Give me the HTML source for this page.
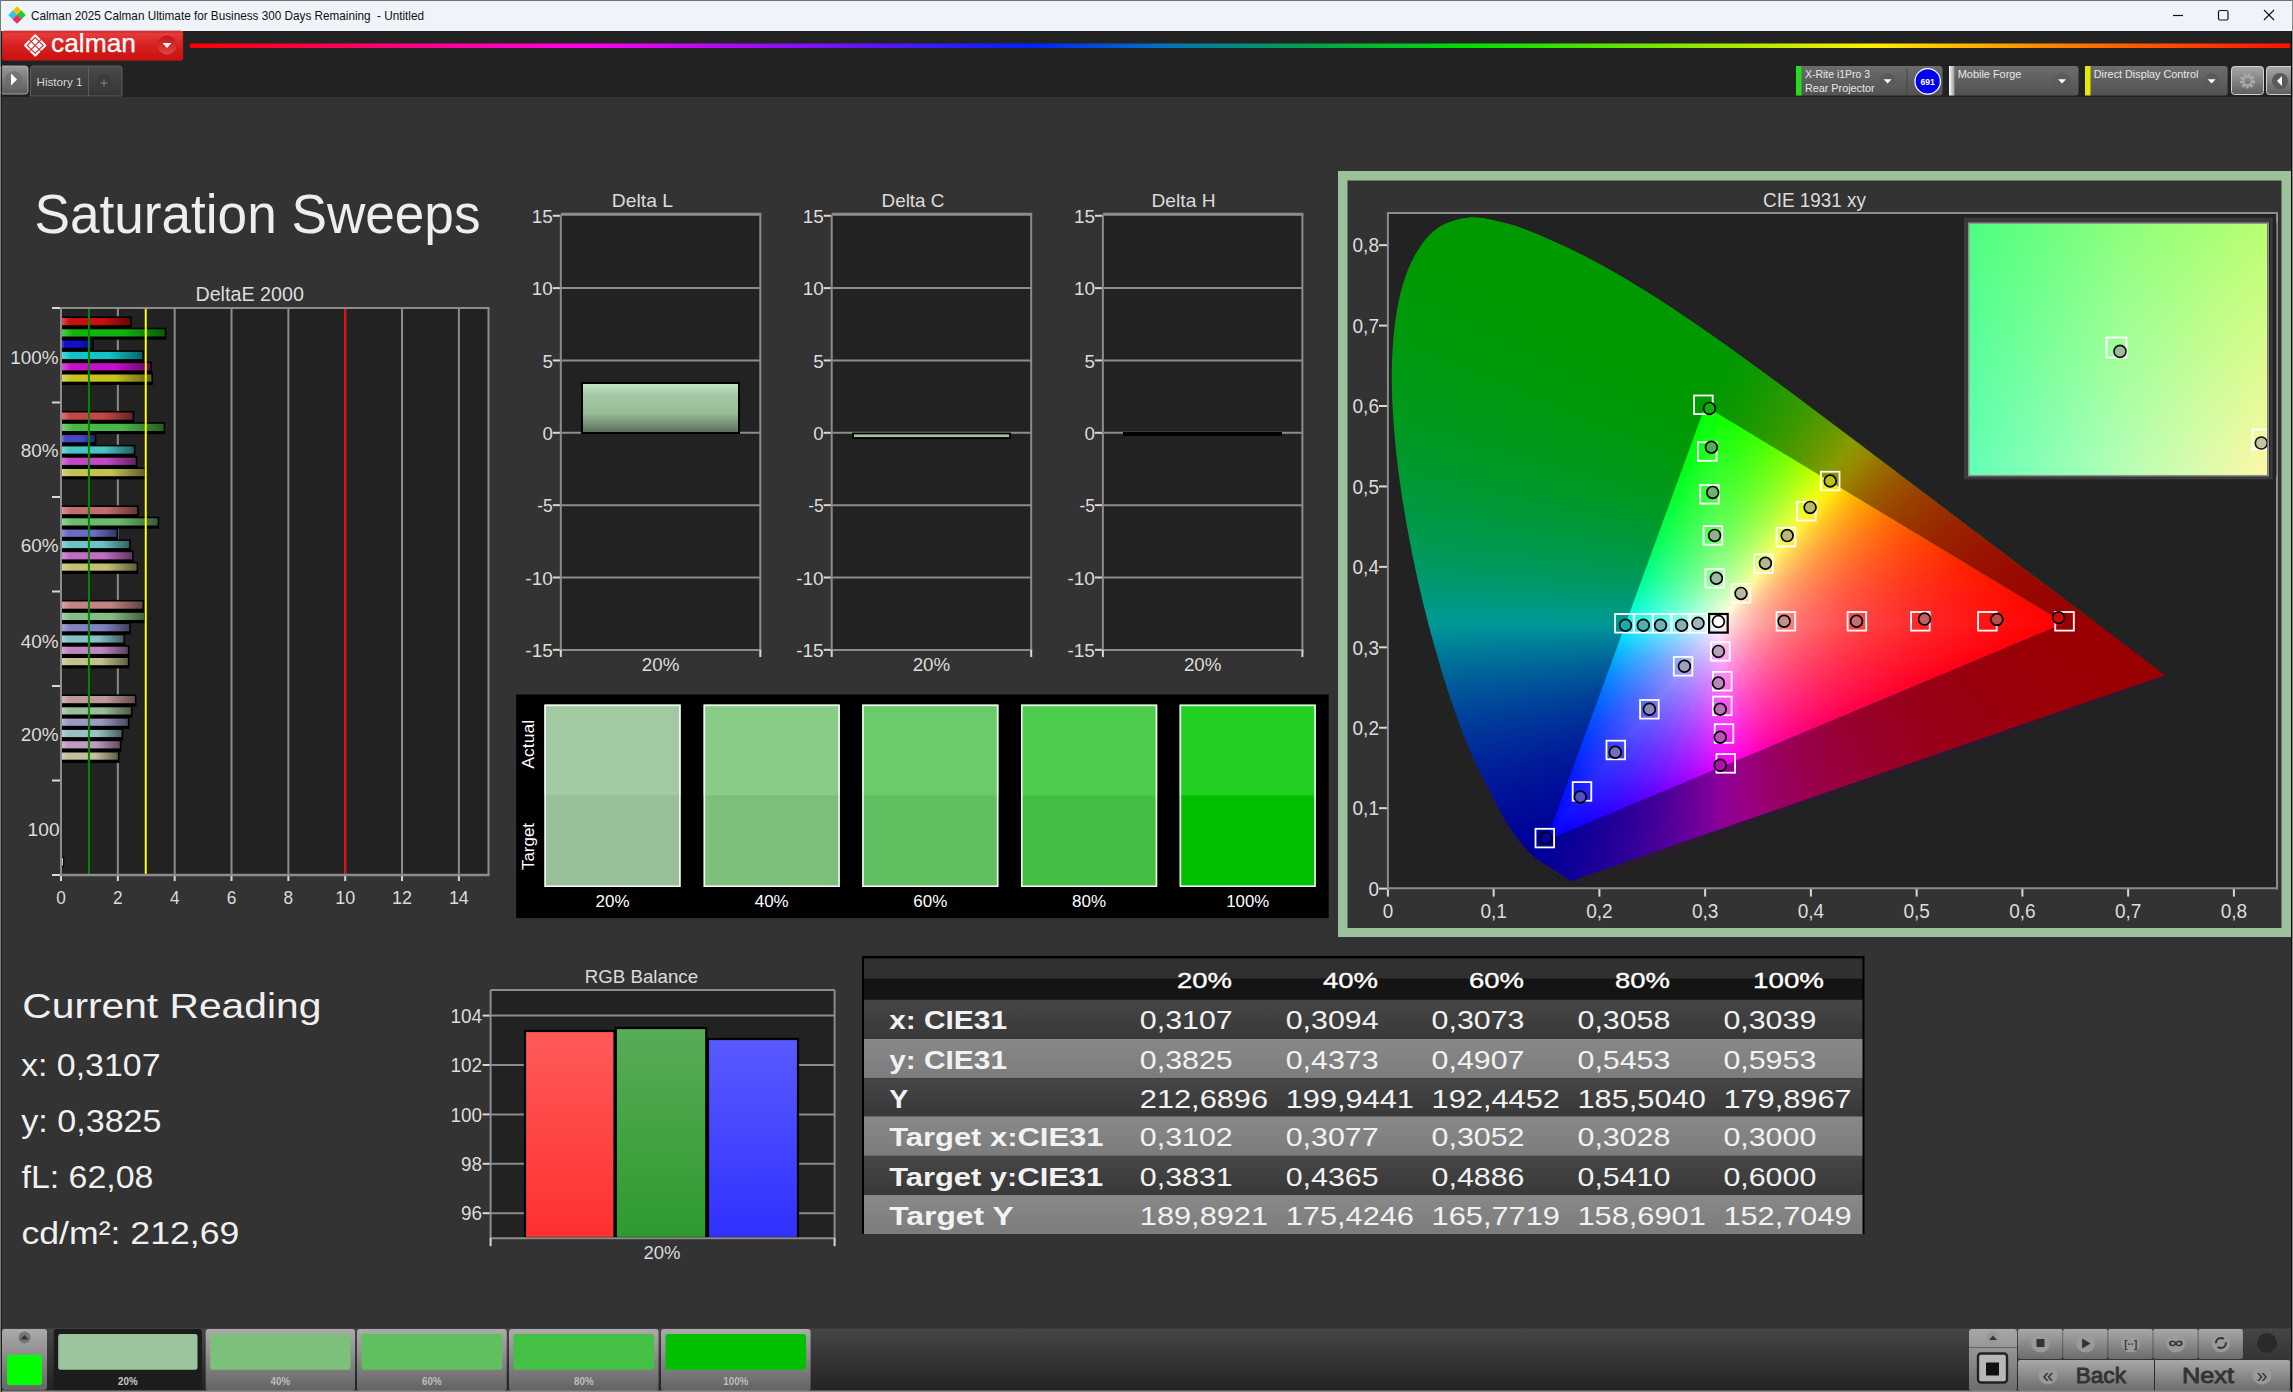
<!DOCTYPE html><html><head><meta charset="utf-8"><title>Calman</title><style>html,body{margin:0;padding:0;background:#333;overflow:hidden;width:2293px;height:1392px}svg{position:absolute;left:0;top:0}text{font-family:"Liberation Sans", sans-serif}.cie{position:absolute;left:0;top:0;width:2293px;height:1392px}</style></head><body><svg width="2293" height="1392" viewBox="0 0 2293 1392"><defs><linearGradient id="gLogo" x1="0" y1="0" x2="0" y2="1"><stop offset="0" stop-color="#e84040"/><stop offset="0.5" stop-color="#d8201f"/><stop offset="1" stop-color="#c81010"/></linearGradient><linearGradient id="gLogoBtn" x1="0" y1="0" x2="0" y2="1"><stop offset="0" stop-color="#c01515"/><stop offset="1" stop-color="#e04545"/></linearGradient><linearGradient id="gRain" x1="0" y1="0" x2="1" y2="0"><stop offset="0" stop-color="#ff0000"/><stop offset="0.19" stop-color="#ff00ee"/><stop offset="0.4" stop-color="#0022ff"/><stop offset="0.46" stop-color="#0070c0"/><stop offset="0.53" stop-color="#00a050"/><stop offset="0.61" stop-color="#00e000"/><stop offset="0.8" stop-color="#ffee00"/><stop offset="0.89" stop-color="#ff8000"/><stop offset="1" stop-color="#ff1000"/></linearGradient><linearGradient id="gTabBtn" x1="0" y1="0" x2="0" y2="1"><stop offset="0" stop-color="#9a9a9a"/><stop offset="1" stop-color="#5a5a5a"/></linearGradient><linearGradient id="gTab" x1="0" y1="0" x2="0" y2="1"><stop offset="0" stop-color="#4a4a4a"/><stop offset="1" stop-color="#353535"/></linearGradient><linearGradient id="gWid" x1="0" y1="0" x2="0" y2="1"><stop offset="0" stop-color="#6c6c6c"/><stop offset="1" stop-color="#525252"/></linearGradient><linearGradient id="gWhiteStripe" x1="0" y1="0" x2="1" y2="0"><stop offset="0" stop-color="#ffffff"/><stop offset="1" stop-color="#999999"/></linearGradient><linearGradient id="gTB" x1="0" y1="0" x2="0" y2="1"><stop offset="0" stop-color="#a8a8a8"/><stop offset="1" stop-color="#5e5e5e"/></linearGradient><linearGradient id="gB00" x1="0" y1="0" x2="1" y2="0"><stop offset="0" stop-color="#d85858"/><stop offset="0.12" stop-color="#c81010"/><stop offset="0.6" stop-color="#c81010"/><stop offset="1" stop-color="#640808"/></linearGradient><linearGradient id="gB01" x1="0" y1="0" x2="1" y2="0"><stop offset="0" stop-color="#58ca58"/><stop offset="0.12" stop-color="#10b410"/><stop offset="0.6" stop-color="#10b410"/><stop offset="1" stop-color="#085a08"/></linearGradient><linearGradient id="gB02" x1="0" y1="0" x2="1" y2="0"><stop offset="0" stop-color="#5858d8"/><stop offset="0.12" stop-color="#1010c8"/><stop offset="0.6" stop-color="#1010c8"/><stop offset="1" stop-color="#080864"/></linearGradient><linearGradient id="gB03" x1="0" y1="0" x2="1" y2="0"><stop offset="0" stop-color="#58d6d8"/><stop offset="0.12" stop-color="#10c4c8"/><stop offset="0.6" stop-color="#10c4c8"/><stop offset="1" stop-color="#086264"/></linearGradient><linearGradient id="gB04" x1="0" y1="0" x2="1" y2="0"><stop offset="0" stop-color="#d658d8"/><stop offset="0.12" stop-color="#c410c8"/><stop offset="0.6" stop-color="#c410c8"/><stop offset="1" stop-color="#620864"/></linearGradient><linearGradient id="gB05" x1="0" y1="0" x2="1" y2="0"><stop offset="0" stop-color="#d8d363"/><stop offset="0.12" stop-color="#c8c020"/><stop offset="0.6" stop-color="#c8c020"/><stop offset="1" stop-color="#646010"/></linearGradient><linearGradient id="gB10" x1="0" y1="0" x2="1" y2="0"><stop offset="0" stop-color="#d67f7f"/><stop offset="0.12" stop-color="#c54848"/><stop offset="0.6" stop-color="#c54848"/><stop offset="1" stop-color="#622424"/></linearGradient><linearGradient id="gB11" x1="0" y1="0" x2="1" y2="0"><stop offset="0" stop-color="#7fcd7f"/><stop offset="0.12" stop-color="#48b848"/><stop offset="0.6" stop-color="#48b848"/><stop offset="1" stop-color="#245c24"/></linearGradient><linearGradient id="gB12" x1="0" y1="0" x2="1" y2="0"><stop offset="0" stop-color="#7f7fd6"/><stop offset="0.12" stop-color="#4848c5"/><stop offset="0.6" stop-color="#4848c5"/><stop offset="1" stop-color="#242462"/></linearGradient><linearGradient id="gB13" x1="0" y1="0" x2="1" y2="0"><stop offset="0" stop-color="#7fd5d6"/><stop offset="0.12" stop-color="#48c3c5"/><stop offset="0.6" stop-color="#48c3c5"/><stop offset="1" stop-color="#246262"/></linearGradient><linearGradient id="gB14" x1="0" y1="0" x2="1" y2="0"><stop offset="0" stop-color="#d57fd6"/><stop offset="0.12" stop-color="#c348c5"/><stop offset="0.6" stop-color="#c348c5"/><stop offset="1" stop-color="#622462"/></linearGradient><linearGradient id="gB15" x1="0" y1="0" x2="1" y2="0"><stop offset="0" stop-color="#d6d387"/><stop offset="0.12" stop-color="#c5c053"/><stop offset="0.6" stop-color="#c5c053"/><stop offset="1" stop-color="#62602a"/></linearGradient><linearGradient id="gB20" x1="0" y1="0" x2="1" y2="0"><stop offset="0" stop-color="#d69898"/><stop offset="0.12" stop-color="#c46c6c"/><stop offset="0.6" stop-color="#c46c6c"/><stop offset="1" stop-color="#623636"/></linearGradient><linearGradient id="gB21" x1="0" y1="0" x2="1" y2="0"><stop offset="0" stop-color="#98cf98"/><stop offset="0.12" stop-color="#6cba6c"/><stop offset="0.6" stop-color="#6cba6c"/><stop offset="1" stop-color="#365d36"/></linearGradient><linearGradient id="gB22" x1="0" y1="0" x2="1" y2="0"><stop offset="0" stop-color="#9898d6"/><stop offset="0.12" stop-color="#6c6cc4"/><stop offset="0.6" stop-color="#6c6cc4"/><stop offset="1" stop-color="#363662"/></linearGradient><linearGradient id="gB23" x1="0" y1="0" x2="1" y2="0"><stop offset="0" stop-color="#98d4d6"/><stop offset="0.12" stop-color="#6cc2c4"/><stop offset="0.6" stop-color="#6cc2c4"/><stop offset="1" stop-color="#366162"/></linearGradient><linearGradient id="gB24" x1="0" y1="0" x2="1" y2="0"><stop offset="0" stop-color="#d498d6"/><stop offset="0.12" stop-color="#c26cc4"/><stop offset="0.6" stop-color="#c26cc4"/><stop offset="1" stop-color="#613662"/></linearGradient><linearGradient id="gB25" x1="0" y1="0" x2="1" y2="0"><stop offset="0" stop-color="#d6d39d"/><stop offset="0.12" stop-color="#c4c073"/><stop offset="0.6" stop-color="#c4c073"/><stop offset="1" stop-color="#62603a"/></linearGradient><linearGradient id="gB30" x1="0" y1="0" x2="1" y2="0"><stop offset="0" stop-color="#d5a9a9"/><stop offset="0.12" stop-color="#c38484"/><stop offset="0.6" stop-color="#c38484"/><stop offset="1" stop-color="#624242"/></linearGradient><linearGradient id="gB31" x1="0" y1="0" x2="1" y2="0"><stop offset="0" stop-color="#a9d0a9"/><stop offset="0.12" stop-color="#84bc84"/><stop offset="0.6" stop-color="#84bc84"/><stop offset="1" stop-color="#425e42"/></linearGradient><linearGradient id="gB32" x1="0" y1="0" x2="1" y2="0"><stop offset="0" stop-color="#a9a9d5"/><stop offset="0.12" stop-color="#8484c3"/><stop offset="0.6" stop-color="#8484c3"/><stop offset="1" stop-color="#424262"/></linearGradient><linearGradient id="gB33" x1="0" y1="0" x2="1" y2="0"><stop offset="0" stop-color="#a9d4d5"/><stop offset="0.12" stop-color="#84c1c3"/><stop offset="0.6" stop-color="#84c1c3"/><stop offset="1" stop-color="#426062"/></linearGradient><linearGradient id="gB34" x1="0" y1="0" x2="1" y2="0"><stop offset="0" stop-color="#d4a9d5"/><stop offset="0.12" stop-color="#c184c3"/><stop offset="0.6" stop-color="#c184c3"/><stop offset="1" stop-color="#604262"/></linearGradient><linearGradient id="gB35" x1="0" y1="0" x2="1" y2="0"><stop offset="0" stop-color="#d5d3ad"/><stop offset="0.12" stop-color="#c3c08a"/><stop offset="0.6" stop-color="#c3c08a"/><stop offset="1" stop-color="#626045"/></linearGradient><linearGradient id="gB40" x1="0" y1="0" x2="1" y2="0"><stop offset="0" stop-color="#d4b8b8"/><stop offset="0.12" stop-color="#c29999"/><stop offset="0.6" stop-color="#c29999"/><stop offset="1" stop-color="#614c4c"/></linearGradient><linearGradient id="gB41" x1="0" y1="0" x2="1" y2="0"><stop offset="0" stop-color="#b8d1b8"/><stop offset="0.12" stop-color="#99bd99"/><stop offset="0.6" stop-color="#99bd99"/><stop offset="1" stop-color="#4c5e4c"/></linearGradient><linearGradient id="gB42" x1="0" y1="0" x2="1" y2="0"><stop offset="0" stop-color="#b8b8d4"/><stop offset="0.12" stop-color="#9999c2"/><stop offset="0.6" stop-color="#9999c2"/><stop offset="1" stop-color="#4c4c61"/></linearGradient><linearGradient id="gB43" x1="0" y1="0" x2="1" y2="0"><stop offset="0" stop-color="#b8d4d4"/><stop offset="0.12" stop-color="#99c1c2"/><stop offset="0.6" stop-color="#99c1c2"/><stop offset="1" stop-color="#4c6061"/></linearGradient><linearGradient id="gB44" x1="0" y1="0" x2="1" y2="0"><stop offset="0" stop-color="#d4b8d4"/><stop offset="0.12" stop-color="#c199c2"/><stop offset="0.6" stop-color="#c199c2"/><stop offset="1" stop-color="#604c61"/></linearGradient><linearGradient id="gB45" x1="0" y1="0" x2="1" y2="0"><stop offset="0" stop-color="#d4d3ba"/><stop offset="0.12" stop-color="#c2c09d"/><stop offset="0.6" stop-color="#c2c09d"/><stop offset="1" stop-color="#61604e"/></linearGradient><linearGradient id="gDL" x1="0" y1="0" x2="0" y2="1"><stop offset="0" stop-color="#c8e4c8"/><stop offset="0.25" stop-color="#a4c8a4"/><stop offset="0.6" stop-color="#98bc98"/><stop offset="1" stop-color="#5a6c5a"/></linearGradient><linearGradient id="gRr" x1="0" y1="0" x2="0" y2="1"><stop offset="0" stop-color="#ff5a5a"/><stop offset="1" stop-color="#ff3030"/></linearGradient><linearGradient id="gRg" x1="0" y1="0" x2="0" y2="1"><stop offset="0" stop-color="#58ac58"/><stop offset="1" stop-color="#2e9a2e"/></linearGradient><linearGradient id="gRb" x1="0" y1="0" x2="0" y2="1"><stop offset="0" stop-color="#5a5aff"/><stop offset="1" stop-color="#3030ff"/></linearGradient><linearGradient id="gRowD" x1="0" y1="0" x2="0" y2="1"><stop offset="0" stop-color="#464646"/><stop offset="1" stop-color="#383838"/></linearGradient><linearGradient id="gRowL" x1="0" y1="0" x2="0" y2="1"><stop offset="0" stop-color="#888888"/><stop offset="1" stop-color="#7c7c7c"/></linearGradient><linearGradient id="gBar" x1="0" y1="0" x2="0" y2="1"><stop offset="0" stop-color="#464646"/><stop offset="1" stop-color="#222222"/></linearGradient><linearGradient id="gBtn" x1="0" y1="0" x2="0" y2="1"><stop offset="0" stop-color="#a8a8a8"/><stop offset="0.5" stop-color="#8a8a8a"/><stop offset="1" stop-color="#6c6c6c"/></linearGradient><linearGradient id="gTabU" x1="0" y1="0" x2="0" y2="1"><stop offset="0" stop-color="#ababab"/><stop offset="0.45" stop-color="#8c8c8c"/><stop offset="1" stop-color="#626262"/></linearGradient><linearGradient id="gLW" x1="0" y1="0" x2="0" y2="1"><stop offset="0" stop-color="#ababab"/><stop offset="1" stop-color="#666666"/></linearGradient></defs><rect x="0" y="0" width="2293" height="1392" fill="#333333"/><rect x="0" y="0" width="2293" height="31" fill="#eef4f9"/><rect x="0" y="0" width="2293" height="1" fill="#6e6e6e"/><rect x="0" y="31" width="2293" height="66" fill="#222222"/><rect x="0" y="0" width="1" height="1392" fill="#7a7a7a"/><text x="31" y="20.4" font-size="13" fill="#111111" textLength="393" lengthAdjust="spacingAndGlyphs">Calman 2025 Calman Ultimate for Business 300 Days Remaining  - Untitled</text><g transform="translate(17,15)"><rect x="-3.2" y="-7.5" width="6.4" height="6.4" fill="#f4c400" transform="rotate(45 0 -4.3)"/><rect x="-7.5" y="-3.2" width="6.4" height="6.4" fill="#33c3f0" transform="rotate(45 -4.3 0)"/><rect x="1.1" y="-3.2" width="6.4" height="6.4" fill="#22cc22" transform="rotate(45 4.3 0)"/><rect x="-3.2" y="1.1" width="6.4" height="6.4" fill="#ee2a6a" transform="rotate(45 0 4.3)"/></g><line x1="2173" y1="15.5" x2="2183" y2="15.5" stroke="#111" stroke-width="1.2"/><rect x="2218.5" y="10.5" width="9.5" height="9.5" rx="1.5" fill="none" stroke="#111" stroke-width="1.2"/><line x1="2264" y1="10" x2="2274" y2="20" stroke="#111" stroke-width="1.1"/><line x1="2274" y1="10" x2="2264" y2="20" stroke="#111" stroke-width="1.1"/><rect x="2" y="31" width="181" height="29.5" rx="2.5" fill="url(#gLogo)" stroke="#8a2020" stroke-width="0.6"/><rect x="2" y="31" width="181" height="2" fill="#d83030"/><g transform="translate(35.2,45.4) rotate(45)"><rect x="-8.2" y="-8.2" width="16.4" height="16.4" rx="1.2" fill="#fff"/><rect x="-5.6" y="-5.6" width="11.2" height="11.2" fill="none" stroke="#d82222" stroke-width="1.1"/><line x1="0" y1="-9" x2="0" y2="9" stroke="#d82222" stroke-width="1.1"/><line x1="-9" y1="0" x2="9" y2="0" stroke="#d82222" stroke-width="1.1"/></g><text x="51" y="52.2" font-size="26.5" fill="#ffffff" textLength="85" lengthAdjust="spacingAndGlyphs" stroke="#fff" stroke-width="0.25">calman</text><circle cx="167" cy="45" r="9.5" fill="url(#gLogoBtn)"/><path d="M162.5,43 L171.5,43 L167,48 Z" fill="#fff"/><rect x="190" y="43.5" width="2100" height="4.5" fill="url(#gRain)"/><rect x="0" y="66" width="28" height="28" rx="3" fill="url(#gTabBtn)" stroke="#bdbdbd" stroke-width="0.8"/><circle cx="13.5" cy="80" r="9" fill="#6a6a6a" opacity="0.6"/><path d="M11,73.5 L17,79.5 L11,85.5 Z" fill="#fff"/><path d="M30.5,96 L30.5,69 Q30.5,66 33.5,66 L119,66 Q122,66 122,69 L122,96 Z" fill="url(#gTab)" stroke="#6a6a6a" stroke-width="0.8"/><line x1="88.5" y1="67" x2="88.5" y2="96" stroke="#666" stroke-width="0.8"/><circle cx="104" cy="83" r="8.5" fill="#3a3a3a"/><line x1="100.5" y1="83" x2="107.5" y2="83" stroke="#8a8a8a" stroke-width="0.9"/><line x1="104" y1="79.5" x2="104" y2="86.5" stroke="#8a8a8a" stroke-width="0.9"/><text x="36.6" y="85.9" font-size="11.3" fill="#d8d8d8" textLength="45.8" lengthAdjust="spacingAndGlyphs">History 1</text><rect x="1796" y="66" width="146.5" height="29.5" rx="3" fill="url(#gWid)"/><rect x="1796" y="66" width="5.5" height="29.5" fill="#22dd22"/><line x1="1907" y1="69" x2="1907" y2="95" stroke="#444" stroke-width="1"/><text x="1805" y="78" font-size="10.6" fill="#e8e8e8" textLength="65" lengthAdjust="spacingAndGlyphs">X-Rite i1Pro 3</text><text x="1805" y="91.8" font-size="10.6" fill="#e8e8e8" textLength="69.5" lengthAdjust="spacingAndGlyphs">Rear Projector</text><circle cx="1887.6" cy="81.3" r="8" fill="#5a5a5a"/><path d="M1883.6,79.3 L1891.6,79.3 L1887.6,83.6 Z" fill="#fff"/><circle cx="1927.7" cy="81.4" r="12.7" fill="#0000ee" stroke="#ffffff" stroke-width="1.2"/><text x="1927.7" y="84.6" font-size="9.5" fill="#ffffff" text-anchor="middle" font-weight="bold" textLength="14.3" lengthAdjust="spacingAndGlyphs">691</text><rect x="1949" y="66" width="129.5" height="29.5" rx="3" fill="url(#gWid)"/><rect x="1949" y="66" width="5.5" height="29.5" fill="url(#gWhiteStripe)"/><text x="1957.8" y="78" font-size="10.6" fill="#e8e8e8" textLength="63.6" lengthAdjust="spacingAndGlyphs">Mobile Forge</text><circle cx="2062" cy="81.3" r="8" fill="#5a5a5a"/><path d="M2058,79.3 L2066,79.3 L2062,83.6 Z" fill="#fff"/><rect x="2085" y="66" width="142.6" height="29.5" rx="3" fill="url(#gWid)"/><rect x="2085" y="66" width="5.5" height="29.5" fill="#e8e800"/><text x="2093.8" y="78" font-size="10.6" fill="#e8e8e8" textLength="104.6" lengthAdjust="spacingAndGlyphs">Direct Display Control</text><circle cx="2211.6" cy="81.3" r="8" fill="#5a5a5a"/><path d="M2207.6,79.3 L2215.6,79.3 L2211.6,83.6 Z" fill="#fff"/><rect x="2231.5" y="66.5" width="32" height="28" rx="3" fill="url(#gTB)" stroke="#e0e0e0" stroke-width="0.9"/><circle cx="2247.5" cy="81" r="6" fill="none" stroke="#aaa" stroke-width="3" stroke-dasharray="2.4 1.6"/><circle cx="2247.5" cy="81" r="4.2" fill="none" stroke="#aaa" stroke-width="2"/><rect x="2266.5" y="66.5" width="30" height="28" rx="3" fill="url(#gTB)" stroke="#e0e0e0" stroke-width="0.9"/><circle cx="2280" cy="81" r="8" fill="#5a5a5a"/><path d="M2282,76 L2282,86 L2277,81 Z" fill="#fff"/><text x="34.5" y="233.1" font-size="55.6" fill="#eeeeee" textLength="446" lengthAdjust="spacingAndGlyphs">Saturation Sweeps</text><rect x="61" y="308" width="427.5" height="567" fill="#222222"/><line x1="117.84" y1="308" x2="117.84" y2="875" stroke="#8c8c8c" stroke-width="2"/><line x1="174.68" y1="308" x2="174.68" y2="875" stroke="#8c8c8c" stroke-width="2"/><line x1="231.52" y1="308" x2="231.52" y2="875" stroke="#8c8c8c" stroke-width="2"/><line x1="288.36" y1="308" x2="288.36" y2="875" stroke="#8c8c8c" stroke-width="2"/><line x1="345.2" y1="308" x2="345.2" y2="875" stroke="#8c8c8c" stroke-width="2"/><line x1="402.04" y1="308" x2="402.04" y2="875" stroke="#8c8c8c" stroke-width="2"/><line x1="458.88" y1="308" x2="458.88" y2="875" stroke="#8c8c8c" stroke-width="2"/><text x="195.4" y="300.7" font-size="20" fill="#dcdcdc" textLength="108.5" lengthAdjust="spacingAndGlyphs">DeltaE 2000</text><line x1="52" y1="308" x2="61" y2="308" stroke="#d8d8d8" stroke-width="2"/><line x1="52" y1="402.5" x2="61" y2="402.5" stroke="#d8d8d8" stroke-width="2"/><line x1="52" y1="497" x2="61" y2="497" stroke="#d8d8d8" stroke-width="2"/><line x1="52" y1="591.5" x2="61" y2="591.5" stroke="#d8d8d8" stroke-width="2"/><line x1="52" y1="686" x2="61" y2="686" stroke="#d8d8d8" stroke-width="2"/><line x1="52" y1="780.5" x2="61" y2="780.5" stroke="#d8d8d8" stroke-width="2"/><line x1="52" y1="875" x2="61" y2="875" stroke="#d8d8d8" stroke-width="2"/><text x="58.6" y="364.1" font-size="18.6" fill="#dcdcdc" text-anchor="end" textLength="48.3" lengthAdjust="spacingAndGlyphs">100%</text><text x="58.6" y="456.6" font-size="18.6" fill="#dcdcdc" text-anchor="end" textLength="37.9" lengthAdjust="spacingAndGlyphs">80%</text><text x="58.6" y="552" font-size="18.6" fill="#dcdcdc" text-anchor="end" textLength="37.9" lengthAdjust="spacingAndGlyphs">60%</text><text x="58.6" y="647.5" font-size="18.6" fill="#dcdcdc" text-anchor="end" textLength="37.9" lengthAdjust="spacingAndGlyphs">40%</text><text x="58.6" y="740.7" font-size="18.6" fill="#dcdcdc" text-anchor="end" textLength="37.9" lengthAdjust="spacingAndGlyphs">20%</text><text x="59.6" y="835.6" font-size="18.6" fill="#dcdcdc" text-anchor="end" textLength="32" lengthAdjust="spacingAndGlyphs">100</text><line x1="61" y1="875" x2="61" y2="881" stroke="#d8d8d8" stroke-width="2"/><text x="61" y="904" font-size="18.5" fill="#dcdcdc" text-anchor="middle" textLength="9.6" lengthAdjust="spacingAndGlyphs">0</text><line x1="117.84" y1="875" x2="117.84" y2="881" stroke="#d8d8d8" stroke-width="2"/><text x="117.84" y="904" font-size="18.5" fill="#dcdcdc" text-anchor="middle" textLength="9.6" lengthAdjust="spacingAndGlyphs">2</text><line x1="174.68" y1="875" x2="174.68" y2="881" stroke="#d8d8d8" stroke-width="2"/><text x="174.68" y="904" font-size="18.5" fill="#dcdcdc" text-anchor="middle" textLength="9.6" lengthAdjust="spacingAndGlyphs">4</text><line x1="231.52" y1="875" x2="231.52" y2="881" stroke="#d8d8d8" stroke-width="2"/><text x="231.52" y="904" font-size="18.5" fill="#dcdcdc" text-anchor="middle" textLength="9.6" lengthAdjust="spacingAndGlyphs">6</text><line x1="288.36" y1="875" x2="288.36" y2="881" stroke="#d8d8d8" stroke-width="2"/><text x="288.36" y="904" font-size="18.5" fill="#dcdcdc" text-anchor="middle" textLength="9.6" lengthAdjust="spacingAndGlyphs">8</text><line x1="345.2" y1="875" x2="345.2" y2="881" stroke="#d8d8d8" stroke-width="2"/><text x="345.2" y="904" font-size="18.5" fill="#dcdcdc" text-anchor="middle" textLength="20" lengthAdjust="spacingAndGlyphs">10</text><line x1="402.04" y1="875" x2="402.04" y2="881" stroke="#d8d8d8" stroke-width="2"/><text x="402.04" y="904" font-size="18.5" fill="#dcdcdc" text-anchor="middle" textLength="20" lengthAdjust="spacingAndGlyphs">12</text><line x1="458.88" y1="875" x2="458.88" y2="881" stroke="#d8d8d8" stroke-width="2"/><text x="458.88" y="904" font-size="18.5" fill="#dcdcdc" text-anchor="middle" textLength="20" lengthAdjust="spacingAndGlyphs">14</text><rect x="61" y="316.4" width="70.66" height="12" fill="#000000"/><rect x="61" y="318" width="69.06" height="7.2" fill="url(#gB00)"/><rect x="61" y="327.7" width="105.33" height="12" fill="#000000"/><rect x="61" y="329.3" width="103.73" height="7.2" fill="url(#gB01)"/><rect x="61" y="339" width="32.58" height="12" fill="#000000"/><rect x="61" y="340.6" width="30.98" height="7.2" fill="url(#gB02)"/><rect x="61" y="350.3" width="82.88" height="12" fill="#000000"/><rect x="61" y="351.9" width="81.28" height="7.2" fill="url(#gB03)"/><rect x="61" y="361.6" width="90.84" height="12" fill="#000000"/><rect x="61" y="363.2" width="89.24" height="7.2" fill="url(#gB04)"/><rect x="61" y="372.9" width="91.98" height="12" fill="#000000"/><rect x="61" y="374.5" width="90.38" height="7.2" fill="url(#gB05)"/><rect x="61" y="410.9" width="73.22" height="12" fill="#000000"/><rect x="61" y="412.5" width="71.62" height="7.2" fill="url(#gB10)"/><rect x="61" y="422.2" width="104.2" height="12" fill="#000000"/><rect x="61" y="423.8" width="102.6" height="7.2" fill="url(#gB11)"/><rect x="61" y="433.5" width="35.42" height="12" fill="#000000"/><rect x="61" y="435.1" width="33.82" height="7.2" fill="url(#gB12)"/><rect x="61" y="444.8" width="74.36" height="12" fill="#000000"/><rect x="61" y="446.4" width="72.76" height="7.2" fill="url(#gB13)"/><rect x="61" y="456.1" width="76.34" height="12" fill="#000000"/><rect x="61" y="457.7" width="74.74" height="7.2" fill="url(#gB14)"/><rect x="61" y="467.4" width="85.15" height="12" fill="#000000"/><rect x="61" y="469" width="83.55" height="7.2" fill="url(#gB15)"/><rect x="61" y="505.4" width="77.77" height="12" fill="#000000"/><rect x="61" y="507" width="76.17" height="7.2" fill="url(#gB20)"/><rect x="61" y="516.7" width="98.23" height="12" fill="#000000"/><rect x="61" y="518.3" width="96.63" height="7.2" fill="url(#gB21)"/><rect x="61" y="528" width="57.3" height="12" fill="#000000"/><rect x="61" y="529.6" width="55.7" height="7.2" fill="url(#gB22)"/><rect x="61" y="539.3" width="69.81" height="12" fill="#000000"/><rect x="61" y="540.9" width="68.21" height="7.2" fill="url(#gB23)"/><rect x="61" y="550.6" width="72.65" height="12" fill="#000000"/><rect x="61" y="552.2" width="71.05" height="7.2" fill="url(#gB24)"/><rect x="61" y="561.9" width="77.2" height="12" fill="#000000"/><rect x="61" y="563.5" width="75.6" height="7.2" fill="url(#gB25)"/><rect x="61" y="599.9" width="83.17" height="12" fill="#000000"/><rect x="61" y="601.5" width="81.57" height="7.2" fill="url(#gB30)"/><rect x="61" y="611.2" width="84.87" height="12" fill="#000000"/><rect x="61" y="612.8" width="83.27" height="7.2" fill="url(#gB31)"/><rect x="61" y="622.5" width="69.81" height="12" fill="#000000"/><rect x="61" y="624.1" width="68.21" height="7.2" fill="url(#gB32)"/><rect x="61" y="633.8" width="64.12" height="12" fill="#000000"/><rect x="61" y="635.4" width="62.52" height="7.2" fill="url(#gB33)"/><rect x="61" y="645.1" width="68.39" height="12" fill="#000000"/><rect x="61" y="646.7" width="66.79" height="7.2" fill="url(#gB34)"/><rect x="61" y="656.4" width="68.39" height="12" fill="#000000"/><rect x="61" y="658" width="66.79" height="7.2" fill="url(#gB35)"/><rect x="61" y="694.4" width="75.49" height="12" fill="#000000"/><rect x="61" y="696" width="73.89" height="7.2" fill="url(#gB40)"/><rect x="61" y="705.7" width="71.51" height="12" fill="#000000"/><rect x="61" y="707.3" width="69.91" height="7.2" fill="url(#gB41)"/><rect x="61" y="717" width="68.39" height="12" fill="#000000"/><rect x="61" y="718.6" width="66.79" height="7.2" fill="url(#gB42)"/><rect x="61" y="728.3" width="62.13" height="12" fill="#000000"/><rect x="61" y="729.9" width="60.53" height="7.2" fill="url(#gB43)"/><rect x="61" y="739.6" width="60.43" height="12" fill="#000000"/><rect x="61" y="741.2" width="58.83" height="7.2" fill="url(#gB44)"/><rect x="61" y="750.9" width="58.44" height="12" fill="#000000"/><rect x="61" y="752.5" width="56.84" height="7.2" fill="url(#gB45)"/><rect x="61" y="857" width="3.2" height="10" fill="#000"/><rect x="61" y="858" width="1.8" height="7.5" fill="#ffffff"/><line x1="88.92" y1="308" x2="88.92" y2="875" stroke="#008a00" stroke-width="2"/><line x1="145.76" y1="308" x2="145.76" y2="875" stroke="#ffff00" stroke-width="2"/><line x1="345.2" y1="308" x2="345.2" y2="875" stroke="#ee0000" stroke-width="2"/><line x1="61" y1="308" x2="489.5" y2="308" stroke="#8c8c8c" stroke-width="2"/><line x1="488.5" y1="308" x2="488.5" y2="875" stroke="#8c8c8c" stroke-width="2"/><line x1="61" y1="307" x2="61" y2="876" stroke="#8c8c8c" stroke-width="2"/><line x1="60" y1="875" x2="489.5" y2="875" stroke="#8c8c8c" stroke-width="2.5"/><rect x="560.8" y="215.7" width="199.5" height="434.2" fill="#222222"/><line x1="560.8" y1="288.1" x2="760.3" y2="288.1" stroke="#8c8c8c" stroke-width="2"/><line x1="560.8" y1="360.45" x2="760.3" y2="360.45" stroke="#8c8c8c" stroke-width="2"/><line x1="560.8" y1="432.8" x2="760.3" y2="432.8" stroke="#8c8c8c" stroke-width="2"/><line x1="560.8" y1="505.15" x2="760.3" y2="505.15" stroke="#8c8c8c" stroke-width="2"/><line x1="560.8" y1="577.5" x2="760.3" y2="577.5" stroke="#8c8c8c" stroke-width="2"/><line x1="552.8" y1="215.75" x2="560.8" y2="215.75" stroke="#d8d8d8" stroke-width="2"/><text x="552.8" y="222.95" font-size="19" fill="#dcdcdc" text-anchor="end" textLength="21" lengthAdjust="spacingAndGlyphs">15</text><line x1="552.8" y1="288.1" x2="560.8" y2="288.1" stroke="#d8d8d8" stroke-width="2"/><text x="552.8" y="295.3" font-size="19" fill="#dcdcdc" text-anchor="end" textLength="21" lengthAdjust="spacingAndGlyphs">10</text><line x1="552.8" y1="360.45" x2="560.8" y2="360.45" stroke="#d8d8d8" stroke-width="2"/><text x="552.8" y="367.65" font-size="19" fill="#dcdcdc" text-anchor="end" textLength="10.4" lengthAdjust="spacingAndGlyphs">5</text><line x1="552.8" y1="432.8" x2="560.8" y2="432.8" stroke="#d8d8d8" stroke-width="2"/><text x="552.8" y="440" font-size="19" fill="#dcdcdc" text-anchor="end" textLength="10.4" lengthAdjust="spacingAndGlyphs">0</text><line x1="552.8" y1="505.15" x2="560.8" y2="505.15" stroke="#d8d8d8" stroke-width="2"/><text x="552.8" y="512.35" font-size="19" fill="#dcdcdc" text-anchor="end" textLength="15.5" lengthAdjust="spacingAndGlyphs">-5</text><line x1="552.8" y1="577.5" x2="560.8" y2="577.5" stroke="#d8d8d8" stroke-width="2"/><text x="552.8" y="584.7" font-size="19" fill="#dcdcdc" text-anchor="end" textLength="27.5" lengthAdjust="spacingAndGlyphs">-10</text><line x1="552.8" y1="649.85" x2="560.8" y2="649.85" stroke="#d8d8d8" stroke-width="2"/><text x="552.8" y="657.05" font-size="19" fill="#dcdcdc" text-anchor="end" textLength="27.5" lengthAdjust="spacingAndGlyphs">-15</text><line x1="560.8" y1="214.2" x2="761.3" y2="214.2" stroke="#8c8c8c" stroke-width="3"/><line x1="560.8" y1="215" x2="560.8" y2="650.9" stroke="#8c8c8c" stroke-width="2"/><line x1="760.3" y1="215" x2="760.3" y2="650.9" stroke="#8c8c8c" stroke-width="2"/><line x1="559.8" y1="649.9" x2="761.3" y2="649.9" stroke="#8c8c8c" stroke-width="2"/><line x1="560.8" y1="650" x2="560.8" y2="657" stroke="#d8d8d8" stroke-width="2"/><line x1="760.3" y1="650" x2="760.3" y2="657" stroke="#d8d8d8" stroke-width="2"/><text x="642.4" y="207" font-size="19" fill="#dcdcdc" text-anchor="middle" textLength="61.2" lengthAdjust="spacingAndGlyphs">Delta L</text><text x="660.55" y="671" font-size="18.5" fill="#dcdcdc" text-anchor="middle" textLength="37.5" lengthAdjust="spacingAndGlyphs">20%</text><rect x="831.7" y="215.7" width="199.5" height="434.2" fill="#222222"/><line x1="831.7" y1="288.1" x2="1031.2" y2="288.1" stroke="#8c8c8c" stroke-width="2"/><line x1="831.7" y1="360.45" x2="1031.2" y2="360.45" stroke="#8c8c8c" stroke-width="2"/><line x1="831.7" y1="432.8" x2="1031.2" y2="432.8" stroke="#8c8c8c" stroke-width="2"/><line x1="831.7" y1="505.15" x2="1031.2" y2="505.15" stroke="#8c8c8c" stroke-width="2"/><line x1="831.7" y1="577.5" x2="1031.2" y2="577.5" stroke="#8c8c8c" stroke-width="2"/><line x1="823.7" y1="215.75" x2="831.7" y2="215.75" stroke="#d8d8d8" stroke-width="2"/><text x="823.7" y="222.95" font-size="19" fill="#dcdcdc" text-anchor="end" textLength="21" lengthAdjust="spacingAndGlyphs">15</text><line x1="823.7" y1="288.1" x2="831.7" y2="288.1" stroke="#d8d8d8" stroke-width="2"/><text x="823.7" y="295.3" font-size="19" fill="#dcdcdc" text-anchor="end" textLength="21" lengthAdjust="spacingAndGlyphs">10</text><line x1="823.7" y1="360.45" x2="831.7" y2="360.45" stroke="#d8d8d8" stroke-width="2"/><text x="823.7" y="367.65" font-size="19" fill="#dcdcdc" text-anchor="end" textLength="10.4" lengthAdjust="spacingAndGlyphs">5</text><line x1="823.7" y1="432.8" x2="831.7" y2="432.8" stroke="#d8d8d8" stroke-width="2"/><text x="823.7" y="440" font-size="19" fill="#dcdcdc" text-anchor="end" textLength="10.4" lengthAdjust="spacingAndGlyphs">0</text><line x1="823.7" y1="505.15" x2="831.7" y2="505.15" stroke="#d8d8d8" stroke-width="2"/><text x="823.7" y="512.35" font-size="19" fill="#dcdcdc" text-anchor="end" textLength="15.5" lengthAdjust="spacingAndGlyphs">-5</text><line x1="823.7" y1="577.5" x2="831.7" y2="577.5" stroke="#d8d8d8" stroke-width="2"/><text x="823.7" y="584.7" font-size="19" fill="#dcdcdc" text-anchor="end" textLength="27.5" lengthAdjust="spacingAndGlyphs">-10</text><line x1="823.7" y1="649.85" x2="831.7" y2="649.85" stroke="#d8d8d8" stroke-width="2"/><text x="823.7" y="657.05" font-size="19" fill="#dcdcdc" text-anchor="end" textLength="27.5" lengthAdjust="spacingAndGlyphs">-15</text><line x1="831.7" y1="214.2" x2="1032.2" y2="214.2" stroke="#8c8c8c" stroke-width="3"/><line x1="831.7" y1="215" x2="831.7" y2="650.9" stroke="#8c8c8c" stroke-width="2"/><line x1="1031.2" y1="215" x2="1031.2" y2="650.9" stroke="#8c8c8c" stroke-width="2"/><line x1="830.7" y1="649.9" x2="1032.2" y2="649.9" stroke="#8c8c8c" stroke-width="2"/><line x1="831.7" y1="650" x2="831.7" y2="657" stroke="#d8d8d8" stroke-width="2"/><line x1="1031.2" y1="650" x2="1031.2" y2="657" stroke="#d8d8d8" stroke-width="2"/><text x="913" y="207" font-size="19" fill="#dcdcdc" text-anchor="middle" textLength="63" lengthAdjust="spacingAndGlyphs">Delta C</text><text x="931.45" y="671" font-size="18.5" fill="#dcdcdc" text-anchor="middle" textLength="37.5" lengthAdjust="spacingAndGlyphs">20%</text><rect x="1102.9" y="215.7" width="199.5" height="434.2" fill="#222222"/><line x1="1102.9" y1="288.1" x2="1302.4" y2="288.1" stroke="#8c8c8c" stroke-width="2"/><line x1="1102.9" y1="360.45" x2="1302.4" y2="360.45" stroke="#8c8c8c" stroke-width="2"/><line x1="1102.9" y1="432.8" x2="1302.4" y2="432.8" stroke="#8c8c8c" stroke-width="2"/><line x1="1102.9" y1="505.15" x2="1302.4" y2="505.15" stroke="#8c8c8c" stroke-width="2"/><line x1="1102.9" y1="577.5" x2="1302.4" y2="577.5" stroke="#8c8c8c" stroke-width="2"/><line x1="1094.9" y1="215.75" x2="1102.9" y2="215.75" stroke="#d8d8d8" stroke-width="2"/><text x="1094.9" y="222.95" font-size="19" fill="#dcdcdc" text-anchor="end" textLength="21" lengthAdjust="spacingAndGlyphs">15</text><line x1="1094.9" y1="288.1" x2="1102.9" y2="288.1" stroke="#d8d8d8" stroke-width="2"/><text x="1094.9" y="295.3" font-size="19" fill="#dcdcdc" text-anchor="end" textLength="21" lengthAdjust="spacingAndGlyphs">10</text><line x1="1094.9" y1="360.45" x2="1102.9" y2="360.45" stroke="#d8d8d8" stroke-width="2"/><text x="1094.9" y="367.65" font-size="19" fill="#dcdcdc" text-anchor="end" textLength="10.4" lengthAdjust="spacingAndGlyphs">5</text><line x1="1094.9" y1="432.8" x2="1102.9" y2="432.8" stroke="#d8d8d8" stroke-width="2"/><text x="1094.9" y="440" font-size="19" fill="#dcdcdc" text-anchor="end" textLength="10.4" lengthAdjust="spacingAndGlyphs">0</text><line x1="1094.9" y1="505.15" x2="1102.9" y2="505.15" stroke="#d8d8d8" stroke-width="2"/><text x="1094.9" y="512.35" font-size="19" fill="#dcdcdc" text-anchor="end" textLength="15.5" lengthAdjust="spacingAndGlyphs">-5</text><line x1="1094.9" y1="577.5" x2="1102.9" y2="577.5" stroke="#d8d8d8" stroke-width="2"/><text x="1094.9" y="584.7" font-size="19" fill="#dcdcdc" text-anchor="end" textLength="27.5" lengthAdjust="spacingAndGlyphs">-10</text><line x1="1094.9" y1="649.85" x2="1102.9" y2="649.85" stroke="#d8d8d8" stroke-width="2"/><text x="1094.9" y="657.05" font-size="19" fill="#dcdcdc" text-anchor="end" textLength="27.5" lengthAdjust="spacingAndGlyphs">-15</text><line x1="1102.9" y1="214.2" x2="1303.4" y2="214.2" stroke="#8c8c8c" stroke-width="3"/><line x1="1102.9" y1="215" x2="1102.9" y2="650.9" stroke="#8c8c8c" stroke-width="2"/><line x1="1302.4" y1="215" x2="1302.4" y2="650.9" stroke="#8c8c8c" stroke-width="2"/><line x1="1101.9" y1="649.9" x2="1303.4" y2="649.9" stroke="#8c8c8c" stroke-width="2"/><line x1="1102.9" y1="650" x2="1102.9" y2="657" stroke="#d8d8d8" stroke-width="2"/><line x1="1302.4" y1="650" x2="1302.4" y2="657" stroke="#d8d8d8" stroke-width="2"/><text x="1183.5" y="207" font-size="19" fill="#dcdcdc" text-anchor="middle" textLength="64" lengthAdjust="spacingAndGlyphs">Delta H</text><text x="1202.65" y="671" font-size="18.5" fill="#dcdcdc" text-anchor="middle" textLength="37.5" lengthAdjust="spacingAndGlyphs">20%</text><rect x="582" y="383" width="157" height="50" fill="url(#gDL)" stroke="#000" stroke-width="2"/><rect x="853" y="433.5" width="157" height="4.5" fill="#a0c4a0" stroke="#000" stroke-width="1.8"/><rect x="1123" y="432" width="159" height="4" fill="#000000"/><rect x="516.2" y="694.5" width="812.5" height="223.6" fill="#000000"/><rect x="544.4" y="704.6" width="136.2" height="182.4" fill="#98bf98"/><rect x="544.4" y="704.6" width="136.2" height="90.7" fill="#a3c9a3"/><rect x="545.2" y="705.4" width="134.6" height="180.8" fill="none" stroke="#f4f4f4" stroke-width="1.6"/><text x="612.5" y="907.3" font-size="17" fill="#ffffff" text-anchor="middle" textLength="34" lengthAdjust="spacingAndGlyphs">20%</text><rect x="703.6" y="704.6" width="136.2" height="182.4" fill="#7bbf7b"/><rect x="703.6" y="704.6" width="136.2" height="90.7" fill="#88cc88"/><rect x="704.4" y="705.4" width="134.6" height="180.8" fill="none" stroke="#f4f4f4" stroke-width="1.6"/><text x="771.7" y="907.3" font-size="17" fill="#ffffff" text-anchor="middle" textLength="34" lengthAdjust="spacingAndGlyphs">40%</text><rect x="862.2" y="704.6" width="136.2" height="182.4" fill="#60bf60"/><rect x="862.2" y="704.6" width="136.2" height="90.7" fill="#6acb6a"/><rect x="863" y="705.4" width="134.6" height="180.8" fill="none" stroke="#f4f4f4" stroke-width="1.6"/><text x="930.3" y="907.3" font-size="17" fill="#ffffff" text-anchor="middle" textLength="34" lengthAdjust="spacingAndGlyphs">60%</text><rect x="1021" y="704.6" width="136.2" height="182.4" fill="#43c043"/><rect x="1021" y="704.6" width="136.2" height="90.7" fill="#4dcd4d"/><rect x="1021.8" y="705.4" width="134.6" height="180.8" fill="none" stroke="#f4f4f4" stroke-width="1.6"/><text x="1089.1" y="907.3" font-size="17" fill="#ffffff" text-anchor="middle" textLength="34" lengthAdjust="spacingAndGlyphs">80%</text><rect x="1179.6" y="704.6" width="136.2" height="182.4" fill="#00c000"/><rect x="1179.6" y="704.6" width="136.2" height="90.7" fill="#22d022"/><rect x="1180.4" y="705.4" width="134.6" height="180.8" fill="none" stroke="#f4f4f4" stroke-width="1.6"/><text x="1247.7" y="907.3" font-size="17" fill="#ffffff" text-anchor="middle" textLength="43" lengthAdjust="spacingAndGlyphs">100%</text><text x="0" y="0" font-size="17" fill="#fff" textLength="49" lengthAdjust="spacingAndGlyphs" text-anchor="middle" transform="translate(534.2,744.3) rotate(-90)">Actual</text><text x="0" y="0" font-size="17" fill="#fff" textLength="47" lengthAdjust="spacingAndGlyphs" text-anchor="middle" transform="translate(534.2,846.5) rotate(-90)">Target</text><text x="22.3" y="1018" font-size="35.8" fill="#f0f0f0" textLength="299" lengthAdjust="spacingAndGlyphs">Current Reading</text><text x="21" y="1075.7" font-size="32" fill="#f0f0f0" textLength="139.5" lengthAdjust="spacingAndGlyphs">x: 0,3107</text><text x="21.3" y="1131.6" font-size="32" fill="#f0f0f0" textLength="140.2" lengthAdjust="spacingAndGlyphs">y: 0,3825</text><text x="21.5" y="1187.9" font-size="32" fill="#f0f0f0" textLength="131.8" lengthAdjust="spacingAndGlyphs">fL: 62,08</text><text x="21.5" y="1244.2" font-size="32" fill="#f0f0f0" textLength="217.8" lengthAdjust="spacingAndGlyphs">cd/m²: 212,69</text><rect x="490.6" y="989.9" width="344" height="248.3" fill="#222222"/><line x1="490.6" y1="1015.6" x2="834.6" y2="1015.6" stroke="#8c8c8c" stroke-width="2"/><line x1="482.6" y1="1015.6" x2="490.6" y2="1015.6" stroke="#d8d8d8" stroke-width="2"/><text x="482" y="1022.8" font-size="19.4" fill="#dcdcdc" text-anchor="end" textLength="31.5" lengthAdjust="spacingAndGlyphs">104</text><line x1="490.6" y1="1065" x2="834.6" y2="1065" stroke="#8c8c8c" stroke-width="2"/><line x1="482.6" y1="1065" x2="490.6" y2="1065" stroke="#d8d8d8" stroke-width="2"/><text x="482" y="1072.2" font-size="19.4" fill="#dcdcdc" text-anchor="end" textLength="31.5" lengthAdjust="spacingAndGlyphs">102</text><line x1="490.6" y1="1114.4" x2="834.6" y2="1114.4" stroke="#8c8c8c" stroke-width="2"/><line x1="482.6" y1="1114.4" x2="490.6" y2="1114.4" stroke="#d8d8d8" stroke-width="2"/><text x="482" y="1121.6" font-size="19.4" fill="#dcdcdc" text-anchor="end" textLength="31.5" lengthAdjust="spacingAndGlyphs">100</text><line x1="490.6" y1="1163.8" x2="834.6" y2="1163.8" stroke="#8c8c8c" stroke-width="2"/><line x1="482.6" y1="1163.8" x2="490.6" y2="1163.8" stroke="#d8d8d8" stroke-width="2"/><text x="482" y="1171" font-size="19.4" fill="#dcdcdc" text-anchor="end" textLength="21" lengthAdjust="spacingAndGlyphs">98</text><line x1="490.6" y1="1213.2" x2="834.6" y2="1213.2" stroke="#8c8c8c" stroke-width="2"/><line x1="482.6" y1="1213.2" x2="490.6" y2="1213.2" stroke="#d8d8d8" stroke-width="2"/><text x="482" y="1220.4" font-size="19.4" fill="#dcdcdc" text-anchor="end" textLength="21" lengthAdjust="spacingAndGlyphs">96</text><text x="641.4" y="983.1" font-size="19" fill="#dcdcdc" text-anchor="middle" textLength="113.3" lengthAdjust="spacingAndGlyphs">RGB Balance</text><text x="662" y="1258.8" font-size="18.3" fill="#dcdcdc" text-anchor="middle" textLength="37" lengthAdjust="spacingAndGlyphs">20%</text><rect x="525" y="1031" width="89.5" height="207" fill="url(#gRr)" stroke="#000" stroke-width="2.2"/><rect x="615.8" y="1028" width="90.5" height="210" fill="url(#gRg)" stroke="#000" stroke-width="2.2"/><rect x="708" y="1039" width="90" height="199" fill="url(#gRb)" stroke="#000" stroke-width="2.2"/><line x1="490.6" y1="989.9" x2="834.6" y2="989.9" stroke="#8c8c8c" stroke-width="2"/><line x1="834.6" y1="989.9" x2="834.6" y2="1238.2" stroke="#8c8c8c" stroke-width="2"/><line x1="490.6" y1="989.9" x2="490.6" y2="1239.2" stroke="#8c8c8c" stroke-width="2"/><line x1="489.6" y1="1238.2" x2="835.6" y2="1238.2" stroke="#8c8c8c" stroke-width="2"/><line x1="490.6" y1="1238.2" x2="490.6" y2="1246.2" stroke="#d8d8d8" stroke-width="2"/><line x1="834.6" y1="1238.2" x2="834.6" y2="1246.2" stroke="#d8d8d8" stroke-width="2"/><rect x="862" y="956" width="1002.5" height="278" fill="#000000"/><rect x="864" y="958.4" width="998.5" height="20.4" fill="#303030"/><rect x="864" y="978.8" width="998.5" height="21" fill="#141414"/><rect x="864" y="999.7" width="998.5" height="39.3" fill="url(#gRowD)"/><rect x="864" y="1039" width="998.5" height="39.2" fill="url(#gRowL)"/><rect x="864" y="1078.2" width="998.5" height="38.1" fill="url(#gRowD)"/><rect x="864" y="1116.3" width="998.5" height="39.6" fill="url(#gRowL)"/><rect x="864" y="1155.9" width="998.5" height="39.1" fill="url(#gRowD)"/><rect x="864" y="1195" width="998.5" height="39" fill="url(#gRowL)"/><text x="1204.5" y="987.8" font-size="22.2" fill="#ffffff" text-anchor="middle" textLength="55" lengthAdjust="spacingAndGlyphs" stroke="#fff" stroke-width="0.35">20%</text><text x="1350.5" y="987.8" font-size="22.2" fill="#ffffff" text-anchor="middle" textLength="55" lengthAdjust="spacingAndGlyphs" stroke="#fff" stroke-width="0.35">40%</text><text x="1496.5" y="987.8" font-size="22.2" fill="#ffffff" text-anchor="middle" textLength="55" lengthAdjust="spacingAndGlyphs" stroke="#fff" stroke-width="0.35">60%</text><text x="1642.5" y="987.8" font-size="22.2" fill="#ffffff" text-anchor="middle" textLength="55" lengthAdjust="spacingAndGlyphs" stroke="#fff" stroke-width="0.35">80%</text><text x="1788.5" y="987.8" font-size="22.2" fill="#ffffff" text-anchor="middle" textLength="71" lengthAdjust="spacingAndGlyphs" stroke="#fff" stroke-width="0.35">100%</text><text x="889.2" y="1029.4" font-size="25.7" fill="#f2f2f2" font-weight="bold" textLength="117.8" lengthAdjust="spacingAndGlyphs">x: CIE31</text><text x="1139.8" y="1029.4" font-size="25" fill="#f2f2f2" textLength="92.9" lengthAdjust="spacingAndGlyphs">0,3107</text><text x="1285.7" y="1029.4" font-size="25" fill="#f2f2f2" textLength="92.9" lengthAdjust="spacingAndGlyphs">0,3094</text><text x="1431.6" y="1029.4" font-size="25" fill="#f2f2f2" textLength="92.9" lengthAdjust="spacingAndGlyphs">0,3073</text><text x="1577.5" y="1029.4" font-size="25" fill="#f2f2f2" textLength="92.9" lengthAdjust="spacingAndGlyphs">0,3058</text><text x="1723.4" y="1029.4" font-size="25" fill="#f2f2f2" textLength="92.9" lengthAdjust="spacingAndGlyphs">0,3039</text><text x="889.2" y="1068.7" font-size="25.7" fill="#f2f2f2" font-weight="bold" textLength="117.8" lengthAdjust="spacingAndGlyphs">y: CIE31</text><text x="1139.8" y="1068.7" font-size="25" fill="#f2f2f2" textLength="92.9" lengthAdjust="spacingAndGlyphs">0,3825</text><text x="1285.7" y="1068.7" font-size="25" fill="#f2f2f2" textLength="92.9" lengthAdjust="spacingAndGlyphs">0,4373</text><text x="1431.6" y="1068.7" font-size="25" fill="#f2f2f2" textLength="92.9" lengthAdjust="spacingAndGlyphs">0,4907</text><text x="1577.5" y="1068.7" font-size="25" fill="#f2f2f2" textLength="92.9" lengthAdjust="spacingAndGlyphs">0,5453</text><text x="1723.4" y="1068.7" font-size="25" fill="#f2f2f2" textLength="92.9" lengthAdjust="spacingAndGlyphs">0,5953</text><text x="889.2" y="1107.9" font-size="25.7" fill="#f2f2f2" font-weight="bold" textLength="19" lengthAdjust="spacingAndGlyphs">Y</text><text x="1139.8" y="1107.9" font-size="25" fill="#f2f2f2" textLength="128.3" lengthAdjust="spacingAndGlyphs">212,6896</text><text x="1285.7" y="1107.9" font-size="25" fill="#f2f2f2" textLength="128.3" lengthAdjust="spacingAndGlyphs">199,9441</text><text x="1431.6" y="1107.9" font-size="25" fill="#f2f2f2" textLength="128.3" lengthAdjust="spacingAndGlyphs">192,4452</text><text x="1577.5" y="1107.9" font-size="25" fill="#f2f2f2" textLength="128.3" lengthAdjust="spacingAndGlyphs">185,5040</text><text x="1723.4" y="1107.9" font-size="25" fill="#f2f2f2" textLength="128.3" lengthAdjust="spacingAndGlyphs">179,8967</text><text x="889.2" y="1146" font-size="25.7" fill="#f2f2f2" font-weight="bold" textLength="214.3" lengthAdjust="spacingAndGlyphs">Target x:CIE31</text><text x="1139.8" y="1146" font-size="25" fill="#f2f2f2" textLength="92.9" lengthAdjust="spacingAndGlyphs">0,3102</text><text x="1285.7" y="1146" font-size="25" fill="#f2f2f2" textLength="92.9" lengthAdjust="spacingAndGlyphs">0,3077</text><text x="1431.6" y="1146" font-size="25" fill="#f2f2f2" textLength="92.9" lengthAdjust="spacingAndGlyphs">0,3052</text><text x="1577.5" y="1146" font-size="25" fill="#f2f2f2" textLength="92.9" lengthAdjust="spacingAndGlyphs">0,3028</text><text x="1723.4" y="1146" font-size="25" fill="#f2f2f2" textLength="92.9" lengthAdjust="spacingAndGlyphs">0,3000</text><text x="889.2" y="1185.6" font-size="25.7" fill="#f2f2f2" font-weight="bold" textLength="214" lengthAdjust="spacingAndGlyphs">Target y:CIE31</text><text x="1139.8" y="1185.6" font-size="25" fill="#f2f2f2" textLength="92.9" lengthAdjust="spacingAndGlyphs">0,3831</text><text x="1285.7" y="1185.6" font-size="25" fill="#f2f2f2" textLength="92.9" lengthAdjust="spacingAndGlyphs">0,4365</text><text x="1431.6" y="1185.6" font-size="25" fill="#f2f2f2" textLength="92.9" lengthAdjust="spacingAndGlyphs">0,4886</text><text x="1577.5" y="1185.6" font-size="25" fill="#f2f2f2" textLength="92.9" lengthAdjust="spacingAndGlyphs">0,5410</text><text x="1723.4" y="1185.6" font-size="25" fill="#f2f2f2" textLength="92.9" lengthAdjust="spacingAndGlyphs">0,6000</text><text x="889.2" y="1224.7" font-size="25.7" fill="#f2f2f2" font-weight="bold" textLength="124.5" lengthAdjust="spacingAndGlyphs">Target Y</text><text x="1139.8" y="1224.7" font-size="25" fill="#f2f2f2" textLength="128.3" lengthAdjust="spacingAndGlyphs">189,8921</text><text x="1285.7" y="1224.7" font-size="25" fill="#f2f2f2" textLength="128.3" lengthAdjust="spacingAndGlyphs">175,4246</text><text x="1431.6" y="1224.7" font-size="25" fill="#f2f2f2" textLength="128.3" lengthAdjust="spacingAndGlyphs">165,7719</text><text x="1577.5" y="1224.7" font-size="25" fill="#f2f2f2" textLength="128.3" lengthAdjust="spacingAndGlyphs">158,6901</text><text x="1723.4" y="1224.7" font-size="25" fill="#f2f2f2" textLength="128.3" lengthAdjust="spacingAndGlyphs">152,7049</text><rect x="1" y="1328.5" width="2290" height="63.5" fill="url(#gBar)"/><rect x="2" y="1329" width="45" height="61" rx="3" fill="url(#gLW)"/><circle cx="24.5" cy="1337.5" r="6" fill="#777"/><path d="M20.5,1339.5 L28.5,1339.5 L24.5,1335 Z" fill="#333"/><rect x="7" y="1355" width="35" height="30" rx="2.5" fill="#00ff00"/><rect x="53.7" y="1329" width="148.3" height="62" rx="3" fill="#1c1c1c"/><rect x="58.2" y="1334" width="139.3" height="35.7" rx="2.5" fill="#9cc49c"/><text x="127.85" y="1384.5" font-size="10.5" fill="#c8c8c8" text-anchor="middle" font-weight="bold" textLength="19.5" lengthAdjust="spacingAndGlyphs">20%</text><rect x="205.7" y="1329" width="149.3" height="62" rx="3" fill="url(#gTabU)"/><rect x="210.2" y="1334" width="140.3" height="35.7" rx="2.5" fill="#7cc07c"/><text x="280.35" y="1384.5" font-size="10.5" fill="#bdbdbd" text-anchor="middle" font-weight="bold" textLength="19.5" lengthAdjust="spacingAndGlyphs">40%</text><rect x="357" y="1329" width="149.7" height="62" rx="3" fill="url(#gTabU)"/><rect x="361.5" y="1334" width="140.7" height="35.7" rx="2.5" fill="#60c060"/><text x="431.85" y="1384.5" font-size="10.5" fill="#bdbdbd" text-anchor="middle" font-weight="bold" textLength="19.5" lengthAdjust="spacingAndGlyphs">60%</text><rect x="509" y="1329" width="149.6" height="62" rx="3" fill="url(#gTabU)"/><rect x="513.5" y="1334" width="140.6" height="35.7" rx="2.5" fill="#44c044"/><text x="583.8" y="1384.5" font-size="10.5" fill="#bdbdbd" text-anchor="middle" font-weight="bold" textLength="19.5" lengthAdjust="spacingAndGlyphs">80%</text><rect x="661" y="1329" width="149.6" height="62" rx="3" fill="url(#gTabU)"/><rect x="665.5" y="1334" width="140.6" height="35.7" rx="2.5" fill="#00c000"/><text x="735.8" y="1384.5" font-size="10.5" fill="#bdbdbd" text-anchor="middle" font-weight="bold" textLength="25" lengthAdjust="spacingAndGlyphs">100%</text><rect x="1969" y="1329" width="48" height="62" rx="3" fill="url(#gBtn)"/><line x1="1969" y1="1347.5" x2="2017" y2="1347.5" stroke="#666" stroke-width="1"/><circle cx="1993" cy="1337.5" r="6.5" fill="#999"/><path d="M1989,1340 L1997,1340 L1993,1335.5 Z" fill="#333"/><rect x="1978" y="1353.5" width="29" height="29" rx="3" fill="#b8b8b8" stroke="#222" stroke-width="2.4"/><rect x="1986" y="1362.5" width="13" height="13" fill="#111"/><rect x="2018" y="1329" width="44.5" height="30" rx="2" fill="url(#gBtn)"/><circle cx="2040.5" cy="1343" r="9.5" fill="#9a9a9a"/><rect x="2063.1" y="1329" width="44.5" height="30" rx="2" fill="url(#gBtn)"/><circle cx="2085.6" cy="1343" r="9.5" fill="#9a9a9a"/><rect x="2108.2" y="1329" width="44.5" height="30" rx="2" fill="url(#gBtn)"/><circle cx="2130.7" cy="1343" r="9.5" fill="#9a9a9a"/><rect x="2153.3" y="1329" width="44.5" height="30" rx="2" fill="url(#gBtn)"/><circle cx="2175.8" cy="1343" r="9.5" fill="#9a9a9a"/><rect x="2198.4" y="1329" width="44.5" height="30" rx="2" fill="url(#gBtn)"/><circle cx="2220.9" cy="1343" r="9.5" fill="#9a9a9a"/><rect x="2036.5" y="1339" width="8" height="8" fill="#333"/><path d="M2082.1,1338.5 L2090.6,1343.5 L2082.1,1348.5 Z" fill="#333"/><text x="2130.7" y="1347.5" font-size="11" fill="#333" text-anchor="middle" font-weight="bold" textLength="13" lengthAdjust="spacingAndGlyphs">[··]</text><text x="2175.8" y="1348" font-size="16" fill="#333" text-anchor="middle" font-weight="bold" textLength="15" lengthAdjust="spacingAndGlyphs">∞</text><circle cx="2220.9" cy="1343" r="5" fill="none" stroke="#333" stroke-width="2" stroke-dasharray="11 4"/><circle cx="2267" cy="1343" r="10" fill="#2a2a2a"/><rect x="2018" y="1360" width="272" height="31" rx="2" fill="url(#gBtn)"/><line x1="2154.5" y1="1360" x2="2154.5" y2="1391" stroke="#2a2a2a" stroke-width="1"/><circle cx="2048" cy="1375" r="9.5" fill="#9a9a9a"/><circle cx="2262" cy="1375" r="9.5" fill="#9a9a9a"/><text x="2048" y="1381.5" font-size="21" fill="#333" text-anchor="middle" textLength="11" lengthAdjust="spacingAndGlyphs">«</text><text x="2262" y="1381.5" font-size="21" fill="#333" text-anchor="middle" textLength="11" lengthAdjust="spacingAndGlyphs">»</text><text x="2075.7" y="1383.1" font-size="22.8" fill="#333333" textLength="50.3" lengthAdjust="spacingAndGlyphs" stroke="#333" stroke-width="0.9">Back</text><text x="2182" y="1383.1" font-size="22.8" fill="#333333" textLength="52" lengthAdjust="spacingAndGlyphs" stroke="#333" stroke-width="0.9">Next</text><rect x="0" y="1390.5" width="2293" height="1.5" fill="#8a8a8a"/><rect x="2291" y="31" width="1" height="1361" fill="#0c0c0c"/><rect x="2292" y="0" width="1" height="1392" fill="#8a8a8a"/><rect x="1" y="31" width="1" height="1361" fill="#1e1e1e"/><rect x="1338" y="171" width="953" height="766" fill="#9bc29b"/><rect x="1347.5" y="180.5" width="934" height="747.5" fill="#333333"/><rect x="1387.9" y="213" width="889.1" height="675.6" fill="#222222"/><text x="1814.5" y="206.7" font-size="20" fill="#dcdcdc" text-anchor="middle" textLength="103" lengthAdjust="spacingAndGlyphs">CIE 1931 xy</text><line x1="1379" y1="888.6" x2="1387.9" y2="888.6" stroke="#d8d8d8" stroke-width="2"/><text x="1379" y="895.9" font-size="19.5" fill="#dcdcdc" text-anchor="end" textLength="10.5" lengthAdjust="spacingAndGlyphs">0</text><line x1="1387.9" y1="888.6" x2="1387.9" y2="896.6" stroke="#d8d8d8" stroke-width="2"/><text x="1387.9" y="917.7" font-size="19.5" fill="#dcdcdc" text-anchor="middle" textLength="10.5" lengthAdjust="spacingAndGlyphs">0</text><line x1="1379" y1="808.17" x2="1387.9" y2="808.17" stroke="#d8d8d8" stroke-width="2"/><text x="1379" y="815.47" font-size="19.5" fill="#dcdcdc" text-anchor="end" textLength="26.5" lengthAdjust="spacingAndGlyphs">0,1</text><line x1="1493.65" y1="888.6" x2="1493.65" y2="896.6" stroke="#d8d8d8" stroke-width="2"/><text x="1493.65" y="917.7" font-size="19.5" fill="#dcdcdc" text-anchor="middle" textLength="26.5" lengthAdjust="spacingAndGlyphs">0,1</text><line x1="1379" y1="727.74" x2="1387.9" y2="727.74" stroke="#d8d8d8" stroke-width="2"/><text x="1379" y="735.04" font-size="19.5" fill="#dcdcdc" text-anchor="end" textLength="26.5" lengthAdjust="spacingAndGlyphs">0,2</text><line x1="1599.4" y1="888.6" x2="1599.4" y2="896.6" stroke="#d8d8d8" stroke-width="2"/><text x="1599.4" y="917.7" font-size="19.5" fill="#dcdcdc" text-anchor="middle" textLength="26.5" lengthAdjust="spacingAndGlyphs">0,2</text><line x1="1379" y1="647.31" x2="1387.9" y2="647.31" stroke="#d8d8d8" stroke-width="2"/><text x="1379" y="654.61" font-size="19.5" fill="#dcdcdc" text-anchor="end" textLength="26.5" lengthAdjust="spacingAndGlyphs">0,3</text><line x1="1705.15" y1="888.6" x2="1705.15" y2="896.6" stroke="#d8d8d8" stroke-width="2"/><text x="1705.15" y="917.7" font-size="19.5" fill="#dcdcdc" text-anchor="middle" textLength="26.5" lengthAdjust="spacingAndGlyphs">0,3</text><line x1="1379" y1="566.88" x2="1387.9" y2="566.88" stroke="#d8d8d8" stroke-width="2"/><text x="1379" y="574.18" font-size="19.5" fill="#dcdcdc" text-anchor="end" textLength="26.5" lengthAdjust="spacingAndGlyphs">0,4</text><line x1="1810.9" y1="888.6" x2="1810.9" y2="896.6" stroke="#d8d8d8" stroke-width="2"/><text x="1810.9" y="917.7" font-size="19.5" fill="#dcdcdc" text-anchor="middle" textLength="26.5" lengthAdjust="spacingAndGlyphs">0,4</text><line x1="1379" y1="486.45" x2="1387.9" y2="486.45" stroke="#d8d8d8" stroke-width="2"/><text x="1379" y="493.75" font-size="19.5" fill="#dcdcdc" text-anchor="end" textLength="26.5" lengthAdjust="spacingAndGlyphs">0,5</text><line x1="1916.65" y1="888.6" x2="1916.65" y2="896.6" stroke="#d8d8d8" stroke-width="2"/><text x="1916.65" y="917.7" font-size="19.5" fill="#dcdcdc" text-anchor="middle" textLength="26.5" lengthAdjust="spacingAndGlyphs">0,5</text><line x1="1379" y1="406.02" x2="1387.9" y2="406.02" stroke="#d8d8d8" stroke-width="2"/><text x="1379" y="413.32" font-size="19.5" fill="#dcdcdc" text-anchor="end" textLength="26.5" lengthAdjust="spacingAndGlyphs">0,6</text><line x1="2022.4" y1="888.6" x2="2022.4" y2="896.6" stroke="#d8d8d8" stroke-width="2"/><text x="2022.4" y="917.7" font-size="19.5" fill="#dcdcdc" text-anchor="middle" textLength="26.5" lengthAdjust="spacingAndGlyphs">0,6</text><line x1="1379" y1="325.59" x2="1387.9" y2="325.59" stroke="#d8d8d8" stroke-width="2"/><text x="1379" y="332.89" font-size="19.5" fill="#dcdcdc" text-anchor="end" textLength="26.5" lengthAdjust="spacingAndGlyphs">0,7</text><line x1="2128.15" y1="888.6" x2="2128.15" y2="896.6" stroke="#d8d8d8" stroke-width="2"/><text x="2128.15" y="917.7" font-size="19.5" fill="#dcdcdc" text-anchor="middle" textLength="26.5" lengthAdjust="spacingAndGlyphs">0,7</text><line x1="1379" y1="245.16" x2="1387.9" y2="245.16" stroke="#d8d8d8" stroke-width="2"/><text x="1379" y="252.46" font-size="19.5" fill="#dcdcdc" text-anchor="end" textLength="26.5" lengthAdjust="spacingAndGlyphs">0,8</text><line x1="2233.9" y1="888.6" x2="2233.9" y2="896.6" stroke="#d8d8d8" stroke-width="2"/><text x="2233.9" y="917.7" font-size="19.5" fill="#dcdcdc" text-anchor="middle" textLength="26.5" lengthAdjust="spacingAndGlyphs">0,8</text><line x1="1387.9" y1="212" x2="1387.9" y2="889.5" stroke="#8c8c8c" stroke-width="2"/><line x1="1387" y1="213" x2="2278" y2="213" stroke="#8c8c8c" stroke-width="2"/><line x1="2277" y1="212" x2="2277" y2="889.5" stroke="#8c8c8c" stroke-width="2"/><line x1="1387" y1="888.2" x2="2278" y2="888.2" stroke="#8c8c8c" stroke-width="2"/></svg><div class="cie" style="clip-path:path('M1570.6,881 C1568.08,879.29 1559.01,873.14 1555.5,870.76 C1552,868.39 1551.89,868.2 1549.58,866.74 C1547.28,865.28 1544.58,864.02 1541.68,862.01 C1538.78,860.01 1535.87,858.18 1532.19,854.71 C1528.52,851.24 1524.37,847.2 1519.64,841.21 C1514.9,835.22 1509.67,828.68 1503.8,818.79 C1497.94,808.9 1491.66,797.14 1484.45,781.87 C1477.24,766.6 1468.64,748.93 1460.55,727.18 C1452.46,705.42 1443.88,679.75 1435.91,651.33 C1427.94,622.91 1419.31,589.29 1412.75,556.67 C1406.19,524.04 1400.03,488.02 1396.57,455.56 C1393.12,423.11 1391.02,390.34 1392.02,361.94 C1393.03,333.55 1396.43,306.29 1402.6,285.21 C1408.77,264.14 1418.39,246.71 1429.04,235.51 C1439.68,224.3 1453.2,219.88 1466.47,217.97 C1479.74,216.07 1494.5,220.35 1508.67,224.09 C1522.84,227.83 1537.62,234.44 1551.5,240.41 C1565.37,246.39 1578.69,253.04 1591.89,259.96 C1605.09,266.88 1617.85,274.24 1630.7,281.92 C1643.55,289.6 1656.29,297.73 1668.98,306.05 C1681.67,314.36 1694.24,323.02 1706.84,331.78 C1719.44,340.55 1731.99,349.56 1744.59,358.65 C1757.2,367.74 1769.87,377.02 1782.45,386.31 C1795.04,395.6 1807.59,405.03 1820.1,414.38 C1832.61,423.74 1845.18,433.15 1857.54,442.45 C1869.89,451.76 1882.18,461.07 1894.23,470.2 C1906.29,479.33 1918.24,488.41 1929.87,497.23 C1941.5,506.05 1952.98,514.76 1964.03,523.13 C1975.08,531.49 1985.93,539.65 1996.17,547.42 C2006.41,555.18 2016.34,562.76 2025.47,569.7 C2034.6,576.63 2042.97,582.95 2050.95,589 C2058.94,595.04 2066.53,600.81 2073.37,605.97 C2080.21,611.13 2086.36,615.71 2091.98,619.96 C2097.61,624.21 2102.58,628.02 2107.11,631.47 C2111.64,634.91 2115.55,637.9 2119.16,640.63 C2122.77,643.37 2125.89,645.69 2128.78,647.87 C2131.68,650.06 2133.26,651.28 2136.5,653.74 C2139.75,656.21 2145.05,660.26 2148.24,662.67 C2151.43,665.09 2153.71,666.76 2155.64,668.22 C2157.58,669.68 2158.57,670.45 2159.88,671.44 C2161.18,672.43 2162.64,673.54 2163.47,674.17 C2164.3,674.8 2164.62,675.04 2164.85,675.22 Z')"><div class="cie" style="background:conic-gradient(from 90.01deg at 2064.7px 623.2px, #000099 157.26deg, #000399 158.74deg, #000899 160.28deg, #000e99 161.9deg, #001599 163.59deg, #001d99 165.37deg, #002799 167.22deg, #003399 169.15deg, #004199 171.16deg, #005299 173.25deg, #006699 175.42deg, #007e99 177.67deg, #009997 180deg, #00997b 182.4deg, #009963 184.86deg, #009950 187.38deg, #009940 189.96deg, #009932 192.57deg, #009926 195.22deg, #00991c 197.88deg, #009914 200.56deg, #00990d 203.24deg, #009908 205.9deg, #009903 208.53deg, #009900 211.13deg)"></div><div class="cie" style="background:conic-gradient(from 226.1deg at 1546.5px 840.3px, #009900 153.97deg, #079900 156.12deg, #109900 158.28deg, #1d9900 160.47deg, #2c9900 162.67deg, #3e9900 164.88deg, #549900 167.09deg, #6d9900 169.29deg, #8b9900 171.48deg, #998600 173.66deg, #996c00 175.8deg, #995700 177.92deg, #994700 180deg, #993a00 182.04deg, #992f00 184.04deg, #992500 185.99deg, #991e00 187.89deg, #991700 189.74deg, #991200 191.54deg, #990d00 193.28deg, #990900 194.97deg, #990600 196.6deg, #990400 198.18deg, #990100 199.7deg, #990000 201.17deg);clip-path:polygon(-862.54px -1145.36px, 4272.94px 1957.36px, 5824.3px -610.38px, 688.82px -3713.1px)"></div><div class="cie" style="background:conic-gradient(from 342.87deg at 1705.2px 406px, #990000 138.27deg, #990001 140.93deg, #990004 143.77deg, #990006 146.79deg, #990009 149.98deg, #99000d 153.34deg, #990012 156.86deg, #990017 160.53deg, #99001d 164.31deg, #990025 168.18deg, #99002e 172.11deg, #990039 176.06deg, #990046 180deg, #990056 183.88deg, #99006b 187.68deg, #990085 191.37deg, #8c0099 194.91deg, #6e0099 198.3deg, #550099 201.52deg, #3f0099 204.56deg, #2d0099 207.43deg, #1d0099 210.12deg, #110099 212.64deg, #070099 215deg, #000099 217.2deg);clip-path:polygon(4831.68px -536.03px, -702.28px 1782.43px, 456.95px 4549.41px, 5990.91px 2230.95px)"></div></div><div class="cie" style="background:conic-gradient(from 0deg at 1718.4px 624px, #14ff00 3.03deg, #23ff00 6.61deg, #35ff00 10.41deg, #4aff00 14.41deg, #61ff00 18.59deg, #7cff00 22.9deg, #9bff00 27.31deg, #bfff00 31.77deg, #e7ff00 36.22deg, #ffea00 40.61deg, #ffc400 44.89deg, #ffa500 49.02deg, #ff8c00 52.96deg, #ff7600 56.7deg, #ff6400 60.22deg, #ff5500 63.52deg, #ff4700 66.59deg, #ff3c00 69.44deg, #ff3200 72.09deg, #ff2900 74.54deg, #ff2100 76.8deg, #ff1b00 78.9deg, #ff1500 80.84deg, #ff1000 82.64deg, #ff0b00 84.3deg, #ff0800 85.85deg, #ff0400 87.29deg, #ff0200 88.62deg, #ff0000 89.87deg, #ff0002 91.12deg, #ff0004 92.51deg, #ff0008 94.06deg, #ff000b 95.8deg, #ff0010 97.75deg, #ff0015 99.96deg, #ff001a 102.47deg, #ff0021 105.34deg, #ff0029 108.63deg, #ff0031 112.41deg, #ff003b 116.76deg, #ff0046 121.75deg, #ff0054 127.46deg, #ff0063 133.89deg, #ff0075 141.02deg, #ff008a 148.7deg, #ff00a3 156.69deg, #ff00c2 164.71deg, #ff00e7 172.45deg, #ea00ff 179.67deg, #c100ff 186.21deg, #9d00ff 192.01deg, #7e00ff 197.11deg, #6200ff 201.55deg, #4a00ff 205.4deg, #3600ff 208.75deg, #2400ff 211.68deg, #1500ff 214.24deg, #0800ff 216.49deg, #0000ff 218.48deg, #0004ff 219.54deg, #000aff 220.73deg, #0011ff 222.07deg, #0019ff 223.58deg, #0023ff 225.3deg, #002eff 227.28deg, #003aff 229.56deg, #0049ff 232.21deg, #005aff 235.32deg, #006dff 238.99deg, #0082ff 243.35deg, #009bff 248.56deg, #00b9ff 254.76deg, #00daff 262.07deg, #00fffc 270.53deg, #00ffd5 279.96deg, #00ffb4 289.98deg, #00ff98 300deg, #00ff7f 309.46deg, #00ff6a 317.93deg, #00ff57 325.27deg, #00ff47 331.48deg, #00ff39 336.71deg, #00ff2d 341.08deg, #00ff22 344.77deg, #00ff18 347.89deg, #00ff10 350.55deg, #00ff09 352.83deg, #00ff04 354.81deg, #00ff00 356.53deg, #08ff00 359.67deg, #14ff00 360deg);clip-path:polygon(1705.2px 406px, 2064.7px 623.2px, 1546.5px 840.3px)"></div><svg width="2293" height="1392" viewBox="0 0 2293 1392"><defs><linearGradient id="gW0" gradientUnits="userSpaceOnUse" x1="1718.4" y1="624" x2="1811.36" y2="470.14"><stop offset="0" stop-color="#fff" stop-opacity="0.998"/><stop offset="0.04" stop-color="#fff" stop-opacity="0.915"/><stop offset="0.08" stop-color="#fff" stop-opacity="0.839"/><stop offset="0.13" stop-color="#fff" stop-opacity="0.753"/><stop offset="0.2" stop-color="#fff" stop-opacity="0.648"/><stop offset="0.28" stop-color="#fff" stop-opacity="0.545"/><stop offset="0.37" stop-color="#fff" stop-opacity="0.446"/><stop offset="0.47" stop-color="#fff" stop-opacity="0.351"/><stop offset="0.58" stop-color="#fff" stop-opacity="0.262"/><stop offset="0.7" stop-color="#fff" stop-opacity="0.179"/><stop offset="0.83" stop-color="#fff" stop-opacity="0.099"/><stop offset="1.0" stop-color="#fff" stop-opacity="0.000"/></linearGradient><linearGradient id="gW1" gradientUnits="userSpaceOnUse" x1="1718.4" y1="624" x2="1811.36" y2="470.14"><stop offset="0" stop-color="#fff" stop-opacity="0.998"/><stop offset="0.04" stop-color="#fff" stop-opacity="0.920"/><stop offset="0.08" stop-color="#fff" stop-opacity="0.847"/><stop offset="0.13" stop-color="#fff" stop-opacity="0.764"/><stop offset="0.2" stop-color="#fff" stop-opacity="0.661"/><stop offset="0.28" stop-color="#fff" stop-opacity="0.559"/><stop offset="0.37" stop-color="#fff" stop-opacity="0.460"/><stop offset="0.47" stop-color="#fff" stop-opacity="0.364"/><stop offset="0.58" stop-color="#fff" stop-opacity="0.273"/><stop offset="0.7" stop-color="#fff" stop-opacity="0.187"/><stop offset="0.83" stop-color="#fff" stop-opacity="0.104"/><stop offset="1.0" stop-color="#fff" stop-opacity="0.000"/></linearGradient><linearGradient id="gW2" gradientUnits="userSpaceOnUse" x1="1718.4" y1="624" x2="1811.36" y2="470.14"><stop offset="0" stop-color="#fff" stop-opacity="0.998"/><stop offset="0.04" stop-color="#fff" stop-opacity="0.924"/><stop offset="0.08" stop-color="#fff" stop-opacity="0.855"/><stop offset="0.13" stop-color="#fff" stop-opacity="0.775"/><stop offset="0.2" stop-color="#fff" stop-opacity="0.675"/><stop offset="0.28" stop-color="#fff" stop-opacity="0.574"/><stop offset="0.37" stop-color="#fff" stop-opacity="0.475"/><stop offset="0.47" stop-color="#fff" stop-opacity="0.378"/><stop offset="0.58" stop-color="#fff" stop-opacity="0.285"/><stop offset="0.7" stop-color="#fff" stop-opacity="0.196"/><stop offset="0.83" stop-color="#fff" stop-opacity="0.109"/><stop offset="1.0" stop-color="#fff" stop-opacity="0.000"/></linearGradient><linearGradient id="gW3" gradientUnits="userSpaceOnUse" x1="1718.4" y1="624" x2="1811.36" y2="470.14"><stop offset="0" stop-color="#fff" stop-opacity="0.998"/><stop offset="0.04" stop-color="#fff" stop-opacity="0.929"/><stop offset="0.08" stop-color="#fff" stop-opacity="0.863"/><stop offset="0.13" stop-color="#fff" stop-opacity="0.786"/><stop offset="0.2" stop-color="#fff" stop-opacity="0.689"/><stop offset="0.28" stop-color="#fff" stop-opacity="0.590"/><stop offset="0.37" stop-color="#fff" stop-opacity="0.491"/><stop offset="0.47" stop-color="#fff" stop-opacity="0.393"/><stop offset="0.58" stop-color="#fff" stop-opacity="0.298"/><stop offset="0.7" stop-color="#fff" stop-opacity="0.206"/><stop offset="0.83" stop-color="#fff" stop-opacity="0.115"/><stop offset="1.0" stop-color="#fff" stop-opacity="0.000"/></linearGradient><linearGradient id="gW4" gradientUnits="userSpaceOnUse" x1="1718.4" y1="624" x2="1811.36" y2="470.14"><stop offset="0" stop-color="#fff" stop-opacity="0.998"/><stop offset="0.04" stop-color="#fff" stop-opacity="0.933"/><stop offset="0.08" stop-color="#fff" stop-opacity="0.871"/><stop offset="0.13" stop-color="#fff" stop-opacity="0.798"/><stop offset="0.2" stop-color="#fff" stop-opacity="0.704"/><stop offset="0.28" stop-color="#fff" stop-opacity="0.606"/><stop offset="0.37" stop-color="#fff" stop-opacity="0.508"/><stop offset="0.47" stop-color="#fff" stop-opacity="0.410"/><stop offset="0.58" stop-color="#fff" stop-opacity="0.313"/><stop offset="0.7" stop-color="#fff" stop-opacity="0.217"/><stop offset="0.83" stop-color="#fff" stop-opacity="0.122"/><stop offset="1.0" stop-color="#fff" stop-opacity="0.000"/></linearGradient><linearGradient id="gW5" gradientUnits="userSpaceOnUse" x1="1718.4" y1="624" x2="1811.36" y2="470.14"><stop offset="0" stop-color="#fff" stop-opacity="0.998"/><stop offset="0.04" stop-color="#fff" stop-opacity="0.938"/><stop offset="0.08" stop-color="#fff" stop-opacity="0.879"/><stop offset="0.13" stop-color="#fff" stop-opacity="0.810"/><stop offset="0.2" stop-color="#fff" stop-opacity="0.719"/><stop offset="0.28" stop-color="#fff" stop-opacity="0.624"/><stop offset="0.37" stop-color="#fff" stop-opacity="0.527"/><stop offset="0.47" stop-color="#fff" stop-opacity="0.428"/><stop offset="0.58" stop-color="#fff" stop-opacity="0.329"/><stop offset="0.7" stop-color="#fff" stop-opacity="0.230"/><stop offset="0.83" stop-color="#fff" stop-opacity="0.130"/><stop offset="1.0" stop-color="#fff" stop-opacity="0.000"/></linearGradient><linearGradient id="gW6" gradientUnits="userSpaceOnUse" x1="1718.4" y1="624" x2="1811.36" y2="470.14"><stop offset="0" stop-color="#fff" stop-opacity="0.998"/><stop offset="0.04" stop-color="#fff" stop-opacity="0.942"/><stop offset="0.08" stop-color="#fff" stop-opacity="0.885"/><stop offset="0.13" stop-color="#fff" stop-opacity="0.817"/><stop offset="0.2" stop-color="#fff" stop-opacity="0.728"/><stop offset="0.28" stop-color="#fff" stop-opacity="0.634"/><stop offset="0.37" stop-color="#fff" stop-opacity="0.537"/><stop offset="0.47" stop-color="#fff" stop-opacity="0.437"/><stop offset="0.58" stop-color="#fff" stop-opacity="0.337"/><stop offset="0.7" stop-color="#fff" stop-opacity="0.236"/><stop offset="0.83" stop-color="#fff" stop-opacity="0.134"/><stop offset="1.0" stop-color="#fff" stop-opacity="0.000"/></linearGradient><linearGradient id="gW7" gradientUnits="userSpaceOnUse" x1="1718.4" y1="624" x2="1811.36" y2="470.14"><stop offset="0" stop-color="#fff" stop-opacity="0.998"/><stop offset="0.04" stop-color="#fff" stop-opacity="0.934"/><stop offset="0.08" stop-color="#fff" stop-opacity="0.869"/><stop offset="0.13" stop-color="#fff" stop-opacity="0.795"/><stop offset="0.2" stop-color="#fff" stop-opacity="0.699"/><stop offset="0.28" stop-color="#fff" stop-opacity="0.601"/><stop offset="0.37" stop-color="#fff" stop-opacity="0.502"/><stop offset="0.47" stop-color="#fff" stop-opacity="0.404"/><stop offset="0.58" stop-color="#fff" stop-opacity="0.307"/><stop offset="0.7" stop-color="#fff" stop-opacity="0.213"/><stop offset="0.83" stop-color="#fff" stop-opacity="0.120"/><stop offset="1.0" stop-color="#fff" stop-opacity="0.000"/></linearGradient><linearGradient id="gW8" gradientUnits="userSpaceOnUse" x1="1718.4" y1="624" x2="1811.36" y2="470.14"><stop offset="0" stop-color="#fff" stop-opacity="0.998"/><stop offset="0.04" stop-color="#fff" stop-opacity="0.925"/><stop offset="0.08" stop-color="#fff" stop-opacity="0.855"/><stop offset="0.13" stop-color="#fff" stop-opacity="0.774"/><stop offset="0.2" stop-color="#fff" stop-opacity="0.673"/><stop offset="0.28" stop-color="#fff" stop-opacity="0.571"/><stop offset="0.37" stop-color="#fff" stop-opacity="0.472"/><stop offset="0.47" stop-color="#fff" stop-opacity="0.375"/><stop offset="0.58" stop-color="#fff" stop-opacity="0.283"/><stop offset="0.7" stop-color="#fff" stop-opacity="0.194"/><stop offset="0.83" stop-color="#fff" stop-opacity="0.108"/><stop offset="1.0" stop-color="#fff" stop-opacity="0.000"/></linearGradient><linearGradient id="gW9" gradientUnits="userSpaceOnUse" x1="1718.4" y1="624" x2="1811.36" y2="470.14"><stop offset="0" stop-color="#fff" stop-opacity="0.998"/><stop offset="0.04" stop-color="#fff" stop-opacity="0.917"/><stop offset="0.08" stop-color="#fff" stop-opacity="0.840"/><stop offset="0.13" stop-color="#fff" stop-opacity="0.754"/><stop offset="0.2" stop-color="#fff" stop-opacity="0.648"/><stop offset="0.28" stop-color="#fff" stop-opacity="0.545"/><stop offset="0.37" stop-color="#fff" stop-opacity="0.445"/><stop offset="0.47" stop-color="#fff" stop-opacity="0.351"/><stop offset="0.58" stop-color="#fff" stop-opacity="0.262"/><stop offset="0.7" stop-color="#fff" stop-opacity="0.178"/><stop offset="0.83" stop-color="#fff" stop-opacity="0.098"/><stop offset="1.0" stop-color="#fff" stop-opacity="0.000"/></linearGradient><linearGradient id="gW10" gradientUnits="userSpaceOnUse" x1="1718.4" y1="624" x2="1811.36" y2="470.14"><stop offset="0" stop-color="#fff" stop-opacity="0.998"/><stop offset="0.04" stop-color="#fff" stop-opacity="0.909"/><stop offset="0.08" stop-color="#fff" stop-opacity="0.826"/><stop offset="0.13" stop-color="#fff" stop-opacity="0.735"/><stop offset="0.2" stop-color="#fff" stop-opacity="0.625"/><stop offset="0.28" stop-color="#fff" stop-opacity="0.520"/><stop offset="0.37" stop-color="#fff" stop-opacity="0.421"/><stop offset="0.47" stop-color="#fff" stop-opacity="0.329"/><stop offset="0.58" stop-color="#fff" stop-opacity="0.244"/><stop offset="0.7" stop-color="#fff" stop-opacity="0.165"/><stop offset="0.83" stop-color="#fff" stop-opacity="0.091"/><stop offset="1.0" stop-color="#fff" stop-opacity="0.000"/></linearGradient><linearGradient id="gW11" gradientUnits="userSpaceOnUse" x1="1718.4" y1="624" x2="1811.36" y2="470.14"><stop offset="0" stop-color="#fff" stop-opacity="0.998"/><stop offset="0.04" stop-color="#fff" stop-opacity="0.901"/><stop offset="0.08" stop-color="#fff" stop-opacity="0.813"/><stop offset="0.13" stop-color="#fff" stop-opacity="0.717"/><stop offset="0.2" stop-color="#fff" stop-opacity="0.604"/><stop offset="0.28" stop-color="#fff" stop-opacity="0.498"/><stop offset="0.37" stop-color="#fff" stop-opacity="0.400"/><stop offset="0.47" stop-color="#fff" stop-opacity="0.310"/><stop offset="0.58" stop-color="#fff" stop-opacity="0.229"/><stop offset="0.7" stop-color="#fff" stop-opacity="0.153"/><stop offset="0.83" stop-color="#fff" stop-opacity="0.084"/><stop offset="1.0" stop-color="#fff" stop-opacity="0.000"/></linearGradient><linearGradient id="gW12" gradientUnits="userSpaceOnUse" x1="1718.4" y1="624" x2="1811.36" y2="470.14"><stop offset="0" stop-color="#fff" stop-opacity="0.998"/><stop offset="0.04" stop-color="#fff" stop-opacity="0.893"/><stop offset="0.08" stop-color="#fff" stop-opacity="0.800"/><stop offset="0.13" stop-color="#fff" stop-opacity="0.700"/><stop offset="0.2" stop-color="#fff" stop-opacity="0.585"/><stop offset="0.28" stop-color="#fff" stop-opacity="0.478"/><stop offset="0.37" stop-color="#fff" stop-opacity="0.381"/><stop offset="0.47" stop-color="#fff" stop-opacity="0.294"/><stop offset="0.58" stop-color="#fff" stop-opacity="0.215"/><stop offset="0.7" stop-color="#fff" stop-opacity="0.144"/><stop offset="0.83" stop-color="#fff" stop-opacity="0.078"/><stop offset="1.0" stop-color="#fff" stop-opacity="0.000"/></linearGradient><linearGradient id="gW13" gradientUnits="userSpaceOnUse" x1="1718.4" y1="624" x2="1811.36" y2="470.14"><stop offset="0" stop-color="#fff" stop-opacity="0.998"/><stop offset="0.04" stop-color="#fff" stop-opacity="0.886"/><stop offset="0.08" stop-color="#fff" stop-opacity="0.787"/><stop offset="0.13" stop-color="#fff" stop-opacity="0.684"/><stop offset="0.2" stop-color="#fff" stop-opacity="0.566"/><stop offset="0.28" stop-color="#fff" stop-opacity="0.460"/><stop offset="0.37" stop-color="#fff" stop-opacity="0.364"/><stop offset="0.47" stop-color="#fff" stop-opacity="0.279"/><stop offset="0.58" stop-color="#fff" stop-opacity="0.203"/><stop offset="0.7" stop-color="#fff" stop-opacity="0.135"/><stop offset="0.83" stop-color="#fff" stop-opacity="0.073"/><stop offset="1.0" stop-color="#fff" stop-opacity="0.000"/></linearGradient><linearGradient id="gW14" gradientUnits="userSpaceOnUse" x1="1718.4" y1="624" x2="1811.36" y2="470.14"><stop offset="0" stop-color="#fff" stop-opacity="0.998"/><stop offset="0.04" stop-color="#fff" stop-opacity="0.878"/><stop offset="0.08" stop-color="#fff" stop-opacity="0.775"/><stop offset="0.13" stop-color="#fff" stop-opacity="0.668"/><stop offset="0.2" stop-color="#fff" stop-opacity="0.549"/><stop offset="0.28" stop-color="#fff" stop-opacity="0.443"/><stop offset="0.37" stop-color="#fff" stop-opacity="0.348"/><stop offset="0.47" stop-color="#fff" stop-opacity="0.266"/><stop offset="0.58" stop-color="#fff" stop-opacity="0.192"/><stop offset="0.7" stop-color="#fff" stop-opacity="0.128"/><stop offset="0.83" stop-color="#fff" stop-opacity="0.069"/><stop offset="1.0" stop-color="#fff" stop-opacity="0.000"/></linearGradient><linearGradient id="gW15" gradientUnits="userSpaceOnUse" x1="1718.4" y1="624" x2="1811.36" y2="470.14"><stop offset="0" stop-color="#fff" stop-opacity="0.998"/><stop offset="0.04" stop-color="#fff" stop-opacity="0.871"/><stop offset="0.08" stop-color="#fff" stop-opacity="0.763"/><stop offset="0.13" stop-color="#fff" stop-opacity="0.654"/><stop offset="0.2" stop-color="#fff" stop-opacity="0.533"/><stop offset="0.28" stop-color="#fff" stop-opacity="0.427"/><stop offset="0.37" stop-color="#fff" stop-opacity="0.334"/><stop offset="0.47" stop-color="#fff" stop-opacity="0.253"/><stop offset="0.58" stop-color="#fff" stop-opacity="0.183"/><stop offset="0.7" stop-color="#fff" stop-opacity="0.121"/><stop offset="0.83" stop-color="#fff" stop-opacity="0.065"/><stop offset="1.0" stop-color="#fff" stop-opacity="0.000"/></linearGradient><linearGradient id="gW16" gradientUnits="userSpaceOnUse" x1="1718.4" y1="624" x2="1811.36" y2="470.14"><stop offset="0" stop-color="#fff" stop-opacity="0.998"/><stop offset="0.04" stop-color="#fff" stop-opacity="0.863"/><stop offset="0.08" stop-color="#fff" stop-opacity="0.752"/><stop offset="0.13" stop-color="#fff" stop-opacity="0.640"/><stop offset="0.2" stop-color="#fff" stop-opacity="0.518"/><stop offset="0.28" stop-color="#fff" stop-opacity="0.412"/><stop offset="0.37" stop-color="#fff" stop-opacity="0.321"/><stop offset="0.47" stop-color="#fff" stop-opacity="0.242"/><stop offset="0.58" stop-color="#fff" stop-opacity="0.174"/><stop offset="0.7" stop-color="#fff" stop-opacity="0.115"/><stop offset="0.83" stop-color="#fff" stop-opacity="0.062"/><stop offset="1.0" stop-color="#fff" stop-opacity="0.000"/></linearGradient><linearGradient id="gW17" gradientUnits="userSpaceOnUse" x1="1718.4" y1="624" x2="1811.36" y2="470.14"><stop offset="0" stop-color="#fff" stop-opacity="0.998"/><stop offset="0.04" stop-color="#fff" stop-opacity="0.856"/><stop offset="0.08" stop-color="#fff" stop-opacity="0.741"/><stop offset="0.13" stop-color="#fff" stop-opacity="0.626"/><stop offset="0.2" stop-color="#fff" stop-opacity="0.504"/><stop offset="0.28" stop-color="#fff" stop-opacity="0.399"/><stop offset="0.37" stop-color="#fff" stop-opacity="0.309"/><stop offset="0.47" stop-color="#fff" stop-opacity="0.232"/><stop offset="0.58" stop-color="#fff" stop-opacity="0.167"/><stop offset="0.7" stop-color="#fff" stop-opacity="0.109"/><stop offset="0.83" stop-color="#fff" stop-opacity="0.059"/><stop offset="1.0" stop-color="#fff" stop-opacity="0.000"/></linearGradient><linearGradient id="gW18" gradientUnits="userSpaceOnUse" x1="1718.4" y1="624" x2="1769.82" y2="746.74"><stop offset="0" stop-color="#fff" stop-opacity="0.998"/><stop offset="0.04" stop-color="#fff" stop-opacity="0.856"/><stop offset="0.08" stop-color="#fff" stop-opacity="0.741"/><stop offset="0.13" stop-color="#fff" stop-opacity="0.626"/><stop offset="0.2" stop-color="#fff" stop-opacity="0.504"/><stop offset="0.28" stop-color="#fff" stop-opacity="0.399"/><stop offset="0.37" stop-color="#fff" stop-opacity="0.309"/><stop offset="0.47" stop-color="#fff" stop-opacity="0.232"/><stop offset="0.58" stop-color="#fff" stop-opacity="0.167"/><stop offset="0.7" stop-color="#fff" stop-opacity="0.109"/><stop offset="0.83" stop-color="#fff" stop-opacity="0.059"/><stop offset="1.0" stop-color="#fff" stop-opacity="0.000"/></linearGradient><linearGradient id="gW19" gradientUnits="userSpaceOnUse" x1="1718.4" y1="624" x2="1769.82" y2="746.74"><stop offset="0" stop-color="#fff" stop-opacity="0.998"/><stop offset="0.04" stop-color="#fff" stop-opacity="0.863"/><stop offset="0.08" stop-color="#fff" stop-opacity="0.752"/><stop offset="0.13" stop-color="#fff" stop-opacity="0.640"/><stop offset="0.2" stop-color="#fff" stop-opacity="0.518"/><stop offset="0.28" stop-color="#fff" stop-opacity="0.412"/><stop offset="0.37" stop-color="#fff" stop-opacity="0.321"/><stop offset="0.47" stop-color="#fff" stop-opacity="0.242"/><stop offset="0.58" stop-color="#fff" stop-opacity="0.174"/><stop offset="0.7" stop-color="#fff" stop-opacity="0.115"/><stop offset="0.83" stop-color="#fff" stop-opacity="0.062"/><stop offset="1.0" stop-color="#fff" stop-opacity="0.000"/></linearGradient><linearGradient id="gW20" gradientUnits="userSpaceOnUse" x1="1718.4" y1="624" x2="1769.82" y2="746.74"><stop offset="0" stop-color="#fff" stop-opacity="0.998"/><stop offset="0.04" stop-color="#fff" stop-opacity="0.871"/><stop offset="0.08" stop-color="#fff" stop-opacity="0.763"/><stop offset="0.13" stop-color="#fff" stop-opacity="0.654"/><stop offset="0.2" stop-color="#fff" stop-opacity="0.533"/><stop offset="0.28" stop-color="#fff" stop-opacity="0.427"/><stop offset="0.37" stop-color="#fff" stop-opacity="0.334"/><stop offset="0.47" stop-color="#fff" stop-opacity="0.253"/><stop offset="0.58" stop-color="#fff" stop-opacity="0.183"/><stop offset="0.7" stop-color="#fff" stop-opacity="0.121"/><stop offset="0.83" stop-color="#fff" stop-opacity="0.065"/><stop offset="1.0" stop-color="#fff" stop-opacity="0.000"/></linearGradient><linearGradient id="gW21" gradientUnits="userSpaceOnUse" x1="1718.4" y1="624" x2="1769.82" y2="746.74"><stop offset="0" stop-color="#fff" stop-opacity="0.998"/><stop offset="0.04" stop-color="#fff" stop-opacity="0.878"/><stop offset="0.08" stop-color="#fff" stop-opacity="0.775"/><stop offset="0.13" stop-color="#fff" stop-opacity="0.668"/><stop offset="0.2" stop-color="#fff" stop-opacity="0.549"/><stop offset="0.28" stop-color="#fff" stop-opacity="0.443"/><stop offset="0.37" stop-color="#fff" stop-opacity="0.348"/><stop offset="0.47" stop-color="#fff" stop-opacity="0.266"/><stop offset="0.58" stop-color="#fff" stop-opacity="0.193"/><stop offset="0.7" stop-color="#fff" stop-opacity="0.128"/><stop offset="0.83" stop-color="#fff" stop-opacity="0.069"/><stop offset="1.0" stop-color="#fff" stop-opacity="0.000"/></linearGradient><linearGradient id="gW22" gradientUnits="userSpaceOnUse" x1="1718.4" y1="624" x2="1769.82" y2="746.74"><stop offset="0" stop-color="#fff" stop-opacity="0.998"/><stop offset="0.04" stop-color="#fff" stop-opacity="0.885"/><stop offset="0.08" stop-color="#fff" stop-opacity="0.787"/><stop offset="0.13" stop-color="#fff" stop-opacity="0.684"/><stop offset="0.2" stop-color="#fff" stop-opacity="0.566"/><stop offset="0.28" stop-color="#fff" stop-opacity="0.460"/><stop offset="0.37" stop-color="#fff" stop-opacity="0.364"/><stop offset="0.47" stop-color="#fff" stop-opacity="0.279"/><stop offset="0.58" stop-color="#fff" stop-opacity="0.203"/><stop offset="0.7" stop-color="#fff" stop-opacity="0.135"/><stop offset="0.83" stop-color="#fff" stop-opacity="0.073"/><stop offset="1.0" stop-color="#fff" stop-opacity="0.000"/></linearGradient><linearGradient id="gW23" gradientUnits="userSpaceOnUse" x1="1718.4" y1="624" x2="1769.82" y2="746.74"><stop offset="0" stop-color="#fff" stop-opacity="0.998"/><stop offset="0.04" stop-color="#fff" stop-opacity="0.893"/><stop offset="0.08" stop-color="#fff" stop-opacity="0.800"/><stop offset="0.13" stop-color="#fff" stop-opacity="0.700"/><stop offset="0.2" stop-color="#fff" stop-opacity="0.585"/><stop offset="0.28" stop-color="#fff" stop-opacity="0.478"/><stop offset="0.37" stop-color="#fff" stop-opacity="0.381"/><stop offset="0.47" stop-color="#fff" stop-opacity="0.294"/><stop offset="0.58" stop-color="#fff" stop-opacity="0.215"/><stop offset="0.7" stop-color="#fff" stop-opacity="0.144"/><stop offset="0.83" stop-color="#fff" stop-opacity="0.078"/><stop offset="1.0" stop-color="#fff" stop-opacity="0.000"/></linearGradient><linearGradient id="gW24" gradientUnits="userSpaceOnUse" x1="1718.4" y1="624" x2="1769.82" y2="746.74"><stop offset="0" stop-color="#fff" stop-opacity="0.998"/><stop offset="0.04" stop-color="#fff" stop-opacity="0.901"/><stop offset="0.08" stop-color="#fff" stop-opacity="0.813"/><stop offset="0.13" stop-color="#fff" stop-opacity="0.717"/><stop offset="0.2" stop-color="#fff" stop-opacity="0.604"/><stop offset="0.28" stop-color="#fff" stop-opacity="0.498"/><stop offset="0.37" stop-color="#fff" stop-opacity="0.400"/><stop offset="0.47" stop-color="#fff" stop-opacity="0.311"/><stop offset="0.58" stop-color="#fff" stop-opacity="0.229"/><stop offset="0.7" stop-color="#fff" stop-opacity="0.154"/><stop offset="0.83" stop-color="#fff" stop-opacity="0.084"/><stop offset="1.0" stop-color="#fff" stop-opacity="0.000"/></linearGradient><linearGradient id="gW25" gradientUnits="userSpaceOnUse" x1="1718.4" y1="624" x2="1769.82" y2="746.74"><stop offset="0" stop-color="#fff" stop-opacity="0.998"/><stop offset="0.04" stop-color="#fff" stop-opacity="0.909"/><stop offset="0.08" stop-color="#fff" stop-opacity="0.826"/><stop offset="0.13" stop-color="#fff" stop-opacity="0.735"/><stop offset="0.2" stop-color="#fff" stop-opacity="0.625"/><stop offset="0.28" stop-color="#fff" stop-opacity="0.520"/><stop offset="0.37" stop-color="#fff" stop-opacity="0.421"/><stop offset="0.47" stop-color="#fff" stop-opacity="0.329"/><stop offset="0.58" stop-color="#fff" stop-opacity="0.244"/><stop offset="0.7" stop-color="#fff" stop-opacity="0.165"/><stop offset="0.83" stop-color="#fff" stop-opacity="0.091"/><stop offset="1.0" stop-color="#fff" stop-opacity="0.000"/></linearGradient><linearGradient id="gW26" gradientUnits="userSpaceOnUse" x1="1718.4" y1="624" x2="1769.82" y2="746.74"><stop offset="0" stop-color="#fff" stop-opacity="0.998"/><stop offset="0.04" stop-color="#fff" stop-opacity="0.917"/><stop offset="0.08" stop-color="#fff" stop-opacity="0.840"/><stop offset="0.13" stop-color="#fff" stop-opacity="0.754"/><stop offset="0.2" stop-color="#fff" stop-opacity="0.648"/><stop offset="0.28" stop-color="#fff" stop-opacity="0.545"/><stop offset="0.37" stop-color="#fff" stop-opacity="0.445"/><stop offset="0.47" stop-color="#fff" stop-opacity="0.351"/><stop offset="0.58" stop-color="#fff" stop-opacity="0.262"/><stop offset="0.7" stop-color="#fff" stop-opacity="0.178"/><stop offset="0.83" stop-color="#fff" stop-opacity="0.099"/><stop offset="1.0" stop-color="#fff" stop-opacity="0.000"/></linearGradient><linearGradient id="gW27" gradientUnits="userSpaceOnUse" x1="1718.4" y1="624" x2="1769.82" y2="746.74"><stop offset="0" stop-color="#fff" stop-opacity="0.998"/><stop offset="0.04" stop-color="#fff" stop-opacity="0.925"/><stop offset="0.08" stop-color="#fff" stop-opacity="0.854"/><stop offset="0.13" stop-color="#fff" stop-opacity="0.774"/><stop offset="0.2" stop-color="#fff" stop-opacity="0.673"/><stop offset="0.28" stop-color="#fff" stop-opacity="0.571"/><stop offset="0.37" stop-color="#fff" stop-opacity="0.472"/><stop offset="0.47" stop-color="#fff" stop-opacity="0.375"/><stop offset="0.58" stop-color="#fff" stop-opacity="0.283"/><stop offset="0.7" stop-color="#fff" stop-opacity="0.194"/><stop offset="0.83" stop-color="#fff" stop-opacity="0.108"/><stop offset="1.0" stop-color="#fff" stop-opacity="0.000"/></linearGradient><linearGradient id="gW28" gradientUnits="userSpaceOnUse" x1="1718.4" y1="624" x2="1769.82" y2="746.74"><stop offset="0" stop-color="#fff" stop-opacity="0.998"/><stop offset="0.04" stop-color="#fff" stop-opacity="0.934"/><stop offset="0.08" stop-color="#fff" stop-opacity="0.869"/><stop offset="0.13" stop-color="#fff" stop-opacity="0.795"/><stop offset="0.2" stop-color="#fff" stop-opacity="0.699"/><stop offset="0.28" stop-color="#fff" stop-opacity="0.601"/><stop offset="0.37" stop-color="#fff" stop-opacity="0.502"/><stop offset="0.47" stop-color="#fff" stop-opacity="0.404"/><stop offset="0.58" stop-color="#fff" stop-opacity="0.307"/><stop offset="0.7" stop-color="#fff" stop-opacity="0.213"/><stop offset="0.83" stop-color="#fff" stop-opacity="0.120"/><stop offset="1.0" stop-color="#fff" stop-opacity="0.000"/></linearGradient><linearGradient id="gW29" gradientUnits="userSpaceOnUse" x1="1718.4" y1="624" x2="1769.82" y2="746.74"><stop offset="0" stop-color="#fff" stop-opacity="0.998"/><stop offset="0.04" stop-color="#fff" stop-opacity="0.942"/><stop offset="0.08" stop-color="#fff" stop-opacity="0.885"/><stop offset="0.13" stop-color="#fff" stop-opacity="0.817"/><stop offset="0.2" stop-color="#fff" stop-opacity="0.728"/><stop offset="0.28" stop-color="#fff" stop-opacity="0.634"/><stop offset="0.37" stop-color="#fff" stop-opacity="0.537"/><stop offset="0.47" stop-color="#fff" stop-opacity="0.437"/><stop offset="0.58" stop-color="#fff" stop-opacity="0.337"/><stop offset="0.7" stop-color="#fff" stop-opacity="0.236"/><stop offset="0.83" stop-color="#fff" stop-opacity="0.135"/><stop offset="1.0" stop-color="#fff" stop-opacity="0.000"/></linearGradient><linearGradient id="gW30" gradientUnits="userSpaceOnUse" x1="1718.4" y1="624" x2="1769.82" y2="746.74"><stop offset="0" stop-color="#fff" stop-opacity="0.998"/><stop offset="0.04" stop-color="#fff" stop-opacity="0.938"/><stop offset="0.08" stop-color="#fff" stop-opacity="0.880"/><stop offset="0.13" stop-color="#fff" stop-opacity="0.811"/><stop offset="0.2" stop-color="#fff" stop-opacity="0.721"/><stop offset="0.28" stop-color="#fff" stop-opacity="0.626"/><stop offset="0.37" stop-color="#fff" stop-opacity="0.529"/><stop offset="0.47" stop-color="#fff" stop-opacity="0.430"/><stop offset="0.58" stop-color="#fff" stop-opacity="0.331"/><stop offset="0.7" stop-color="#fff" stop-opacity="0.231"/><stop offset="0.83" stop-color="#fff" stop-opacity="0.131"/><stop offset="1.0" stop-color="#fff" stop-opacity="0.000"/></linearGradient><linearGradient id="gW31" gradientUnits="userSpaceOnUse" x1="1718.4" y1="624" x2="1769.82" y2="746.74"><stop offset="0" stop-color="#fff" stop-opacity="0.998"/><stop offset="0.04" stop-color="#fff" stop-opacity="0.934"/><stop offset="0.08" stop-color="#fff" stop-opacity="0.872"/><stop offset="0.13" stop-color="#fff" stop-opacity="0.799"/><stop offset="0.2" stop-color="#fff" stop-opacity="0.706"/><stop offset="0.28" stop-color="#fff" stop-opacity="0.609"/><stop offset="0.37" stop-color="#fff" stop-opacity="0.510"/><stop offset="0.47" stop-color="#fff" stop-opacity="0.412"/><stop offset="0.58" stop-color="#fff" stop-opacity="0.315"/><stop offset="0.7" stop-color="#fff" stop-opacity="0.219"/><stop offset="0.83" stop-color="#fff" stop-opacity="0.123"/><stop offset="1.0" stop-color="#fff" stop-opacity="0.000"/></linearGradient><linearGradient id="gW32" gradientUnits="userSpaceOnUse" x1="1718.4" y1="624" x2="1769.82" y2="746.74"><stop offset="0" stop-color="#fff" stop-opacity="0.998"/><stop offset="0.04" stop-color="#fff" stop-opacity="0.929"/><stop offset="0.08" stop-color="#fff" stop-opacity="0.864"/><stop offset="0.13" stop-color="#fff" stop-opacity="0.788"/><stop offset="0.2" stop-color="#fff" stop-opacity="0.691"/><stop offset="0.28" stop-color="#fff" stop-opacity="0.592"/><stop offset="0.37" stop-color="#fff" stop-opacity="0.493"/><stop offset="0.47" stop-color="#fff" stop-opacity="0.396"/><stop offset="0.58" stop-color="#fff" stop-opacity="0.300"/><stop offset="0.7" stop-color="#fff" stop-opacity="0.207"/><stop offset="0.83" stop-color="#fff" stop-opacity="0.116"/><stop offset="1.0" stop-color="#fff" stop-opacity="0.000"/></linearGradient><linearGradient id="gW33" gradientUnits="userSpaceOnUse" x1="1718.4" y1="624" x2="1769.82" y2="746.74"><stop offset="0" stop-color="#fff" stop-opacity="0.998"/><stop offset="0.04" stop-color="#fff" stop-opacity="0.925"/><stop offset="0.08" stop-color="#fff" stop-opacity="0.856"/><stop offset="0.13" stop-color="#fff" stop-opacity="0.776"/><stop offset="0.2" stop-color="#fff" stop-opacity="0.677"/><stop offset="0.28" stop-color="#fff" stop-opacity="0.576"/><stop offset="0.37" stop-color="#fff" stop-opacity="0.477"/><stop offset="0.47" stop-color="#fff" stop-opacity="0.380"/><stop offset="0.58" stop-color="#fff" stop-opacity="0.287"/><stop offset="0.7" stop-color="#fff" stop-opacity="0.197"/><stop offset="0.83" stop-color="#fff" stop-opacity="0.110"/><stop offset="1.0" stop-color="#fff" stop-opacity="0.000"/></linearGradient><linearGradient id="gW34" gradientUnits="userSpaceOnUse" x1="1718.4" y1="624" x2="1769.82" y2="746.74"><stop offset="0" stop-color="#fff" stop-opacity="0.998"/><stop offset="0.04" stop-color="#fff" stop-opacity="0.920"/><stop offset="0.08" stop-color="#fff" stop-opacity="0.848"/><stop offset="0.13" stop-color="#fff" stop-opacity="0.765"/><stop offset="0.2" stop-color="#fff" stop-opacity="0.663"/><stop offset="0.28" stop-color="#fff" stop-opacity="0.561"/><stop offset="0.37" stop-color="#fff" stop-opacity="0.462"/><stop offset="0.47" stop-color="#fff" stop-opacity="0.366"/><stop offset="0.58" stop-color="#fff" stop-opacity="0.275"/><stop offset="0.7" stop-color="#fff" stop-opacity="0.188"/><stop offset="0.83" stop-color="#fff" stop-opacity="0.105"/><stop offset="1.0" stop-color="#fff" stop-opacity="0.000"/></linearGradient><linearGradient id="gW35" gradientUnits="userSpaceOnUse" x1="1718.4" y1="624" x2="1769.82" y2="746.74"><stop offset="0" stop-color="#fff" stop-opacity="0.998"/><stop offset="0.04" stop-color="#fff" stop-opacity="0.916"/><stop offset="0.08" stop-color="#fff" stop-opacity="0.840"/><stop offset="0.13" stop-color="#fff" stop-opacity="0.755"/><stop offset="0.2" stop-color="#fff" stop-opacity="0.650"/><stop offset="0.28" stop-color="#fff" stop-opacity="0.547"/><stop offset="0.37" stop-color="#fff" stop-opacity="0.448"/><stop offset="0.47" stop-color="#fff" stop-opacity="0.353"/><stop offset="0.58" stop-color="#fff" stop-opacity="0.264"/><stop offset="0.7" stop-color="#fff" stop-opacity="0.180"/><stop offset="0.83" stop-color="#fff" stop-opacity="0.100"/><stop offset="1.0" stop-color="#fff" stop-opacity="0.000"/></linearGradient><linearGradient id="gW36" gradientUnits="userSpaceOnUse" x1="1718.4" y1="624" x2="1636.48" y2="594.06"><stop offset="0" stop-color="#fff" stop-opacity="0.998"/><stop offset="0.04" stop-color="#fff" stop-opacity="0.914"/><stop offset="0.08" stop-color="#fff" stop-opacity="0.838"/><stop offset="0.13" stop-color="#fff" stop-opacity="0.753"/><stop offset="0.2" stop-color="#fff" stop-opacity="0.648"/><stop offset="0.28" stop-color="#fff" stop-opacity="0.546"/><stop offset="0.37" stop-color="#fff" stop-opacity="0.447"/><stop offset="0.47" stop-color="#fff" stop-opacity="0.352"/><stop offset="0.58" stop-color="#fff" stop-opacity="0.263"/><stop offset="0.7" stop-color="#fff" stop-opacity="0.179"/><stop offset="0.83" stop-color="#fff" stop-opacity="0.099"/><stop offset="1.0" stop-color="#fff" stop-opacity="0.000"/></linearGradient><linearGradient id="gW37" gradientUnits="userSpaceOnUse" x1="1718.4" y1="624" x2="1636.48" y2="594.06"><stop offset="0" stop-color="#fff" stop-opacity="0.998"/><stop offset="0.04" stop-color="#fff" stop-opacity="0.918"/><stop offset="0.08" stop-color="#fff" stop-opacity="0.846"/><stop offset="0.13" stop-color="#fff" stop-opacity="0.764"/><stop offset="0.2" stop-color="#fff" stop-opacity="0.661"/><stop offset="0.28" stop-color="#fff" stop-opacity="0.560"/><stop offset="0.37" stop-color="#fff" stop-opacity="0.461"/><stop offset="0.47" stop-color="#fff" stop-opacity="0.365"/><stop offset="0.58" stop-color="#fff" stop-opacity="0.274"/><stop offset="0.7" stop-color="#fff" stop-opacity="0.187"/><stop offset="0.83" stop-color="#fff" stop-opacity="0.104"/><stop offset="1.0" stop-color="#fff" stop-opacity="0.000"/></linearGradient><linearGradient id="gW38" gradientUnits="userSpaceOnUse" x1="1718.4" y1="624" x2="1636.48" y2="594.06"><stop offset="0" stop-color="#fff" stop-opacity="0.998"/><stop offset="0.04" stop-color="#fff" stop-opacity="0.923"/><stop offset="0.08" stop-color="#fff" stop-opacity="0.854"/><stop offset="0.13" stop-color="#fff" stop-opacity="0.774"/><stop offset="0.2" stop-color="#fff" stop-opacity="0.675"/><stop offset="0.28" stop-color="#fff" stop-opacity="0.575"/><stop offset="0.37" stop-color="#fff" stop-opacity="0.476"/><stop offset="0.47" stop-color="#fff" stop-opacity="0.379"/><stop offset="0.58" stop-color="#fff" stop-opacity="0.286"/><stop offset="0.7" stop-color="#fff" stop-opacity="0.197"/><stop offset="0.83" stop-color="#fff" stop-opacity="0.110"/><stop offset="1.0" stop-color="#fff" stop-opacity="0.000"/></linearGradient><linearGradient id="gW39" gradientUnits="userSpaceOnUse" x1="1718.4" y1="624" x2="1636.48" y2="594.06"><stop offset="0" stop-color="#fff" stop-opacity="0.998"/><stop offset="0.04" stop-color="#fff" stop-opacity="0.927"/><stop offset="0.08" stop-color="#fff" stop-opacity="0.862"/><stop offset="0.13" stop-color="#fff" stop-opacity="0.786"/><stop offset="0.2" stop-color="#fff" stop-opacity="0.689"/><stop offset="0.28" stop-color="#fff" stop-opacity="0.590"/><stop offset="0.37" stop-color="#fff" stop-opacity="0.492"/><stop offset="0.47" stop-color="#fff" stop-opacity="0.394"/><stop offset="0.58" stop-color="#fff" stop-opacity="0.299"/><stop offset="0.7" stop-color="#fff" stop-opacity="0.207"/><stop offset="0.83" stop-color="#fff" stop-opacity="0.116"/><stop offset="1.0" stop-color="#fff" stop-opacity="0.000"/></linearGradient><linearGradient id="gW40" gradientUnits="userSpaceOnUse" x1="1718.4" y1="624" x2="1636.48" y2="594.06"><stop offset="0" stop-color="#fff" stop-opacity="0.998"/><stop offset="0.04" stop-color="#fff" stop-opacity="0.932"/><stop offset="0.08" stop-color="#fff" stop-opacity="0.870"/><stop offset="0.13" stop-color="#fff" stop-opacity="0.797"/><stop offset="0.2" stop-color="#fff" stop-opacity="0.704"/><stop offset="0.28" stop-color="#fff" stop-opacity="0.607"/><stop offset="0.37" stop-color="#fff" stop-opacity="0.509"/><stop offset="0.47" stop-color="#fff" stop-opacity="0.411"/><stop offset="0.58" stop-color="#fff" stop-opacity="0.314"/><stop offset="0.7" stop-color="#fff" stop-opacity="0.218"/><stop offset="0.83" stop-color="#fff" stop-opacity="0.123"/><stop offset="1.0" stop-color="#fff" stop-opacity="0.000"/></linearGradient><linearGradient id="gW41" gradientUnits="userSpaceOnUse" x1="1718.4" y1="624" x2="1636.48" y2="594.06"><stop offset="0" stop-color="#fff" stop-opacity="0.998"/><stop offset="0.04" stop-color="#fff" stop-opacity="0.936"/><stop offset="0.08" stop-color="#fff" stop-opacity="0.878"/><stop offset="0.13" stop-color="#fff" stop-opacity="0.809"/><stop offset="0.2" stop-color="#fff" stop-opacity="0.719"/><stop offset="0.28" stop-color="#fff" stop-opacity="0.625"/><stop offset="0.37" stop-color="#fff" stop-opacity="0.528"/><stop offset="0.47" stop-color="#fff" stop-opacity="0.429"/><stop offset="0.58" stop-color="#fff" stop-opacity="0.330"/><stop offset="0.7" stop-color="#fff" stop-opacity="0.230"/><stop offset="0.83" stop-color="#fff" stop-opacity="0.131"/><stop offset="1.0" stop-color="#fff" stop-opacity="0.000"/></linearGradient><linearGradient id="gW42" gradientUnits="userSpaceOnUse" x1="1718.4" y1="624" x2="1636.48" y2="594.06"><stop offset="0" stop-color="#fff" stop-opacity="0.998"/><stop offset="0.04" stop-color="#fff" stop-opacity="0.941"/><stop offset="0.08" stop-color="#fff" stop-opacity="0.886"/><stop offset="0.13" stop-color="#fff" stop-opacity="0.821"/><stop offset="0.2" stop-color="#fff" stop-opacity="0.735"/><stop offset="0.28" stop-color="#fff" stop-opacity="0.644"/><stop offset="0.37" stop-color="#fff" stop-opacity="0.548"/><stop offset="0.47" stop-color="#fff" stop-opacity="0.449"/><stop offset="0.58" stop-color="#fff" stop-opacity="0.347"/><stop offset="0.7" stop-color="#fff" stop-opacity="0.245"/><stop offset="0.83" stop-color="#fff" stop-opacity="0.140"/><stop offset="1.0" stop-color="#fff" stop-opacity="0.000"/></linearGradient><linearGradient id="gW43" gradientUnits="userSpaceOnUse" x1="1718.4" y1="624" x2="1636.48" y2="594.06"><stop offset="0" stop-color="#fff" stop-opacity="0.998"/><stop offset="0.04" stop-color="#fff" stop-opacity="0.946"/><stop offset="0.08" stop-color="#fff" stop-opacity="0.895"/><stop offset="0.13" stop-color="#fff" stop-opacity="0.834"/><stop offset="0.2" stop-color="#fff" stop-opacity="0.752"/><stop offset="0.28" stop-color="#fff" stop-opacity="0.664"/><stop offset="0.37" stop-color="#fff" stop-opacity="0.569"/><stop offset="0.47" stop-color="#fff" stop-opacity="0.470"/><stop offset="0.58" stop-color="#fff" stop-opacity="0.367"/><stop offset="0.7" stop-color="#fff" stop-opacity="0.261"/><stop offset="0.83" stop-color="#fff" stop-opacity="0.150"/><stop offset="1.0" stop-color="#fff" stop-opacity="0.000"/></linearGradient><linearGradient id="gW44" gradientUnits="userSpaceOnUse" x1="1718.4" y1="624" x2="1636.48" y2="594.06"><stop offset="0" stop-color="#fff" stop-opacity="0.998"/><stop offset="0.04" stop-color="#fff" stop-opacity="0.950"/><stop offset="0.08" stop-color="#fff" stop-opacity="0.904"/><stop offset="0.13" stop-color="#fff" stop-opacity="0.847"/><stop offset="0.2" stop-color="#fff" stop-opacity="0.770"/><stop offset="0.28" stop-color="#fff" stop-opacity="0.685"/><stop offset="0.37" stop-color="#fff" stop-opacity="0.593"/><stop offset="0.47" stop-color="#fff" stop-opacity="0.494"/><stop offset="0.58" stop-color="#fff" stop-opacity="0.390"/><stop offset="0.7" stop-color="#fff" stop-opacity="0.280"/><stop offset="0.83" stop-color="#fff" stop-opacity="0.163"/><stop offset="1.0" stop-color="#fff" stop-opacity="0.000"/></linearGradient><linearGradient id="gW45" gradientUnits="userSpaceOnUse" x1="1718.4" y1="624" x2="1636.48" y2="594.06"><stop offset="0" stop-color="#fff" stop-opacity="0.998"/><stop offset="0.04" stop-color="#fff" stop-opacity="0.950"/><stop offset="0.08" stop-color="#fff" stop-opacity="0.903"/><stop offset="0.13" stop-color="#fff" stop-opacity="0.846"/><stop offset="0.2" stop-color="#fff" stop-opacity="0.769"/><stop offset="0.28" stop-color="#fff" stop-opacity="0.683"/><stop offset="0.37" stop-color="#fff" stop-opacity="0.591"/><stop offset="0.47" stop-color="#fff" stop-opacity="0.492"/><stop offset="0.58" stop-color="#fff" stop-opacity="0.388"/><stop offset="0.7" stop-color="#fff" stop-opacity="0.278"/><stop offset="0.83" stop-color="#fff" stop-opacity="0.161"/><stop offset="1.0" stop-color="#fff" stop-opacity="0.000"/></linearGradient><linearGradient id="gW46" gradientUnits="userSpaceOnUse" x1="1718.4" y1="624" x2="1636.48" y2="594.06"><stop offset="0" stop-color="#fff" stop-opacity="0.998"/><stop offset="0.04" stop-color="#fff" stop-opacity="0.945"/><stop offset="0.08" stop-color="#fff" stop-opacity="0.894"/><stop offset="0.13" stop-color="#fff" stop-opacity="0.833"/><stop offset="0.2" stop-color="#fff" stop-opacity="0.751"/><stop offset="0.28" stop-color="#fff" stop-opacity="0.662"/><stop offset="0.37" stop-color="#fff" stop-opacity="0.567"/><stop offset="0.47" stop-color="#fff" stop-opacity="0.468"/><stop offset="0.58" stop-color="#fff" stop-opacity="0.365"/><stop offset="0.7" stop-color="#fff" stop-opacity="0.259"/><stop offset="0.83" stop-color="#fff" stop-opacity="0.149"/><stop offset="1.0" stop-color="#fff" stop-opacity="0.000"/></linearGradient><linearGradient id="gW47" gradientUnits="userSpaceOnUse" x1="1718.4" y1="624" x2="1636.48" y2="594.06"><stop offset="0" stop-color="#fff" stop-opacity="0.998"/><stop offset="0.04" stop-color="#fff" stop-opacity="0.940"/><stop offset="0.08" stop-color="#fff" stop-opacity="0.886"/><stop offset="0.13" stop-color="#fff" stop-opacity="0.820"/><stop offset="0.2" stop-color="#fff" stop-opacity="0.734"/><stop offset="0.28" stop-color="#fff" stop-opacity="0.642"/><stop offset="0.37" stop-color="#fff" stop-opacity="0.545"/><stop offset="0.47" stop-color="#fff" stop-opacity="0.446"/><stop offset="0.58" stop-color="#fff" stop-opacity="0.346"/><stop offset="0.7" stop-color="#fff" stop-opacity="0.243"/><stop offset="0.83" stop-color="#fff" stop-opacity="0.139"/><stop offset="1.0" stop-color="#fff" stop-opacity="0.000"/></linearGradient><linearGradient id="gW48" gradientUnits="userSpaceOnUse" x1="1718.4" y1="624" x2="1636.48" y2="594.06"><stop offset="0" stop-color="#fff" stop-opacity="0.998"/><stop offset="0.04" stop-color="#fff" stop-opacity="0.936"/><stop offset="0.08" stop-color="#fff" stop-opacity="0.877"/><stop offset="0.13" stop-color="#fff" stop-opacity="0.808"/><stop offset="0.2" stop-color="#fff" stop-opacity="0.717"/><stop offset="0.28" stop-color="#fff" stop-opacity="0.623"/><stop offset="0.37" stop-color="#fff" stop-opacity="0.525"/><stop offset="0.47" stop-color="#fff" stop-opacity="0.427"/><stop offset="0.58" stop-color="#fff" stop-opacity="0.328"/><stop offset="0.7" stop-color="#fff" stop-opacity="0.229"/><stop offset="0.83" stop-color="#fff" stop-opacity="0.130"/><stop offset="1.0" stop-color="#fff" stop-opacity="0.000"/></linearGradient><linearGradient id="gW49" gradientUnits="userSpaceOnUse" x1="1718.4" y1="624" x2="1636.48" y2="594.06"><stop offset="0" stop-color="#fff" stop-opacity="0.998"/><stop offset="0.04" stop-color="#fff" stop-opacity="0.931"/><stop offset="0.08" stop-color="#fff" stop-opacity="0.869"/><stop offset="0.13" stop-color="#fff" stop-opacity="0.796"/><stop offset="0.2" stop-color="#fff" stop-opacity="0.702"/><stop offset="0.28" stop-color="#fff" stop-opacity="0.605"/><stop offset="0.37" stop-color="#fff" stop-opacity="0.507"/><stop offset="0.47" stop-color="#fff" stop-opacity="0.409"/><stop offset="0.58" stop-color="#fff" stop-opacity="0.312"/><stop offset="0.7" stop-color="#fff" stop-opacity="0.217"/><stop offset="0.83" stop-color="#fff" stop-opacity="0.122"/><stop offset="1.0" stop-color="#fff" stop-opacity="0.000"/></linearGradient><linearGradient id="gW50" gradientUnits="userSpaceOnUse" x1="1718.4" y1="624" x2="1636.48" y2="594.06"><stop offset="0" stop-color="#fff" stop-opacity="0.998"/><stop offset="0.04" stop-color="#fff" stop-opacity="0.927"/><stop offset="0.08" stop-color="#fff" stop-opacity="0.861"/><stop offset="0.13" stop-color="#fff" stop-opacity="0.784"/><stop offset="0.2" stop-color="#fff" stop-opacity="0.687"/><stop offset="0.28" stop-color="#fff" stop-opacity="0.588"/><stop offset="0.37" stop-color="#fff" stop-opacity="0.490"/><stop offset="0.47" stop-color="#fff" stop-opacity="0.392"/><stop offset="0.58" stop-color="#fff" stop-opacity="0.298"/><stop offset="0.7" stop-color="#fff" stop-opacity="0.205"/><stop offset="0.83" stop-color="#fff" stop-opacity="0.115"/><stop offset="1.0" stop-color="#fff" stop-opacity="0.000"/></linearGradient><linearGradient id="gW51" gradientUnits="userSpaceOnUse" x1="1718.4" y1="624" x2="1636.48" y2="594.06"><stop offset="0" stop-color="#fff" stop-opacity="0.998"/><stop offset="0.04" stop-color="#fff" stop-opacity="0.922"/><stop offset="0.08" stop-color="#fff" stop-opacity="0.853"/><stop offset="0.13" stop-color="#fff" stop-opacity="0.773"/><stop offset="0.2" stop-color="#fff" stop-opacity="0.673"/><stop offset="0.28" stop-color="#fff" stop-opacity="0.573"/><stop offset="0.37" stop-color="#fff" stop-opacity="0.474"/><stop offset="0.47" stop-color="#fff" stop-opacity="0.377"/><stop offset="0.58" stop-color="#fff" stop-opacity="0.285"/><stop offset="0.7" stop-color="#fff" stop-opacity="0.195"/><stop offset="0.83" stop-color="#fff" stop-opacity="0.109"/><stop offset="1.0" stop-color="#fff" stop-opacity="0.000"/></linearGradient><linearGradient id="gW52" gradientUnits="userSpaceOnUse" x1="1718.4" y1="624" x2="1636.48" y2="594.06"><stop offset="0" stop-color="#fff" stop-opacity="0.998"/><stop offset="0.04" stop-color="#fff" stop-opacity="0.918"/><stop offset="0.08" stop-color="#fff" stop-opacity="0.845"/><stop offset="0.13" stop-color="#fff" stop-opacity="0.762"/><stop offset="0.2" stop-color="#fff" stop-opacity="0.660"/><stop offset="0.28" stop-color="#fff" stop-opacity="0.558"/><stop offset="0.37" stop-color="#fff" stop-opacity="0.459"/><stop offset="0.47" stop-color="#fff" stop-opacity="0.363"/><stop offset="0.58" stop-color="#fff" stop-opacity="0.273"/><stop offset="0.7" stop-color="#fff" stop-opacity="0.186"/><stop offset="0.83" stop-color="#fff" stop-opacity="0.104"/><stop offset="1.0" stop-color="#fff" stop-opacity="0.000"/></linearGradient><linearGradient id="gW53" gradientUnits="userSpaceOnUse" x1="1718.4" y1="624" x2="1636.48" y2="594.06"><stop offset="0" stop-color="#fff" stop-opacity="0.998"/><stop offset="0.04" stop-color="#fff" stop-opacity="0.913"/><stop offset="0.08" stop-color="#fff" stop-opacity="0.837"/><stop offset="0.13" stop-color="#fff" stop-opacity="0.751"/><stop offset="0.2" stop-color="#fff" stop-opacity="0.647"/><stop offset="0.28" stop-color="#fff" stop-opacity="0.544"/><stop offset="0.37" stop-color="#fff" stop-opacity="0.445"/><stop offset="0.47" stop-color="#fff" stop-opacity="0.351"/><stop offset="0.58" stop-color="#fff" stop-opacity="0.262"/><stop offset="0.7" stop-color="#fff" stop-opacity="0.178"/><stop offset="0.83" stop-color="#fff" stop-opacity="0.099"/><stop offset="1.0" stop-color="#fff" stop-opacity="0.000"/></linearGradient><clipPath id="cTri"><polygon points="1705.2,406 2064.7,623.2 1546.5,840.3"/></clipPath></defs><g clip-path="url(#cTri)"><polygon shape-rendering="crispEdges" points="1718.4,624 1703.39,376.05 1726.16,388.08" fill="url(#gW0)"/><polygon shape-rendering="crispEdges" points="1718.4,624 1726.16,388.08 1749.24,400.41" fill="url(#gW1)"/><polygon shape-rendering="crispEdges" points="1718.4,624 1749.24,400.41 1772.58,413.14" fill="url(#gW2)"/><polygon shape-rendering="crispEdges" points="1718.4,624 1772.58,413.14 1796.06,426.34" fill="url(#gW3)"/><polygon shape-rendering="crispEdges" points="1718.4,624 1796.06,426.34 1819.51,440.04" fill="url(#gW4)"/><polygon shape-rendering="crispEdges" points="1718.4,624 1819.51,440.04 1842.76,454.2" fill="url(#gW5)"/><polygon shape-rendering="crispEdges" points="1718.4,624 1842.76,454.2 1865.65,468.7" fill="url(#gW6)"/><polygon shape-rendering="crispEdges" points="1718.4,624 1865.65,468.7 1888.08,483.39" fill="url(#gW7)"/><polygon shape-rendering="crispEdges" points="1718.4,624 1888.08,483.39 1910.02,498.13" fill="url(#gW8)"/><polygon shape-rendering="crispEdges" points="1718.4,624 1910.02,498.13 1931.52,512.79" fill="url(#gW9)"/><polygon shape-rendering="crispEdges" points="1718.4,624 1931.52,512.79 1952.62,527.28" fill="url(#gW10)"/><polygon shape-rendering="crispEdges" points="1718.4,624 1952.62,527.28 1973.41,541.57" fill="url(#gW11)"/><polygon shape-rendering="crispEdges" points="1718.4,624 1973.41,541.57 1993.96,555.64" fill="url(#gW12)"/><polygon shape-rendering="crispEdges" points="1718.4,624 1993.96,555.64 2014.31,569.5" fill="url(#gW13)"/><polygon shape-rendering="crispEdges" points="1718.4,624 2014.31,569.5 2034.54,583.16" fill="url(#gW14)"/><polygon shape-rendering="crispEdges" points="1718.4,624 2034.54,583.16 2054.66,596.63" fill="url(#gW15)"/><polygon shape-rendering="crispEdges" points="1718.4,624 2054.66,596.63 2074.7,609.95" fill="url(#gW16)"/><polygon shape-rendering="crispEdges" points="1718.4,624 2074.7,609.95 2094.7,623.13" fill="url(#gW17)"/><polygon shape-rendering="crispEdges" points="1718.4,624 2094.7,623.13 2065.89,636.32" fill="url(#gW18)"/><polygon shape-rendering="crispEdges" points="1718.4,624 2065.89,636.32 2037.02,649.74" fill="url(#gW19)"/><polygon shape-rendering="crispEdges" points="1718.4,624 2037.02,649.74 2008.06,663.43" fill="url(#gW20)"/><polygon shape-rendering="crispEdges" points="1718.4,624 2008.06,663.43 1978.93,677.48" fill="url(#gW21)"/><polygon shape-rendering="crispEdges" points="1718.4,624 1978.93,677.48 1949.54,691.97" fill="url(#gW22)"/><polygon shape-rendering="crispEdges" points="1718.4,624 1949.54,691.97 1919.7,707" fill="url(#gW23)"/><polygon shape-rendering="crispEdges" points="1718.4,624 1919.7,707 1889.16,722.63" fill="url(#gW24)"/><polygon shape-rendering="crispEdges" points="1718.4,624 1889.16,722.63 1857.53,738.78" fill="url(#gW25)"/><polygon shape-rendering="crispEdges" points="1718.4,624 1857.53,738.78 1824.47,755.07" fill="url(#gW26)"/><polygon shape-rendering="crispEdges" points="1718.4,624 1824.47,755.07 1789.96,770.78" fill="url(#gW27)"/><polygon shape-rendering="crispEdges" points="1718.4,624 1789.96,770.78 1754.6,785.14" fill="url(#gW28)"/><polygon shape-rendering="crispEdges" points="1718.4,624 1754.6,785.14 1719.41,797.93" fill="url(#gW29)"/><polygon shape-rendering="crispEdges" points="1718.4,624 1719.41,797.93 1685.15,809.52" fill="url(#gW30)"/><polygon shape-rendering="crispEdges" points="1718.4,624 1685.15,809.52 1652.06,820.48" fill="url(#gW31)"/><polygon shape-rendering="crispEdges" points="1718.4,624 1652.06,820.48 1620,831.22" fill="url(#gW32)"/><polygon shape-rendering="crispEdges" points="1718.4,624 1620,831.22 1588.74,841.96" fill="url(#gW33)"/><polygon shape-rendering="crispEdges" points="1718.4,624 1588.74,841.96 1558.07,852.81" fill="url(#gW34)"/><polygon shape-rendering="crispEdges" points="1718.4,624 1558.07,852.81 1527.83,863.79" fill="url(#gW35)"/><polygon shape-rendering="crispEdges" points="1718.4,624 1527.83,863.79 1535.91,839.05" fill="url(#gW36)"/><polygon shape-rendering="crispEdges" points="1718.4,624 1535.91,839.05 1543.85,814.14" fill="url(#gW37)"/><polygon shape-rendering="crispEdges" points="1718.4,624 1543.85,814.14 1551.62,789.02" fill="url(#gW38)"/><polygon shape-rendering="crispEdges" points="1718.4,624 1551.62,789.02 1559.21,763.57" fill="url(#gW39)"/><polygon shape-rendering="crispEdges" points="1718.4,624 1559.21,763.57 1566.57,737.64" fill="url(#gW40)"/><polygon shape-rendering="crispEdges" points="1718.4,624 1566.57,737.64 1573.69,710.99" fill="url(#gW41)"/><polygon shape-rendering="crispEdges" points="1718.4,624 1573.69,710.99 1580.66,683.26" fill="url(#gW42)"/><polygon shape-rendering="crispEdges" points="1718.4,624 1580.66,683.26 1587.79,653.99" fill="url(#gW43)"/><polygon shape-rendering="crispEdges" points="1718.4,624 1587.79,653.99 1595.85,622.87" fill="url(#gW44)"/><polygon shape-rendering="crispEdges" points="1718.4,624 1595.85,622.87 1605.92,590.45" fill="url(#gW45)"/><polygon shape-rendering="crispEdges" points="1718.4,624 1605.92,590.45 1618.39,558.45" fill="url(#gW46)"/><polygon shape-rendering="crispEdges" points="1718.4,624 1618.39,558.45 1632.2,528.5" fill="url(#gW47)"/><polygon shape-rendering="crispEdges" points="1718.4,624 1632.2,528.5 1645.9,500.78" fill="url(#gW48)"/><polygon shape-rendering="crispEdges" points="1718.4,624 1645.9,500.78 1658.82,474.65" fill="url(#gW49)"/><polygon shape-rendering="crispEdges" points="1718.4,624 1658.82,474.65 1670.87,449.44" fill="url(#gW50)"/><polygon shape-rendering="crispEdges" points="1718.4,624 1670.87,449.44 1682.21,424.74" fill="url(#gW51)"/><polygon shape-rendering="crispEdges" points="1718.4,624 1682.21,424.74 1693,400.32" fill="url(#gW52)"/><polygon shape-rendering="crispEdges" points="1718.4,624 1693,400.32 1703.39,376.05" fill="url(#gW53)"/></g><path d="M1571.16,884.74 L1570.42,884.74 L1569.16,884.5 L1567.99,883.94 L1566.51,883.05 L1564.4,881.68 L1561.75,879.83 L1558.26,877.5 L1553.5,874.36 L1547.58,870.34 L1540.18,864.71 L1531.19,856.51 L1519.14,842.11 L1503.8,818.79 L1484.45,781.87" fill="none" stroke="#20184a" stroke-width="1.1" stroke-opacity="0.9"/><line x1="1571.16" y1="885.24" x2="2166" y2="676.5" stroke="#3a1044" stroke-width="1.1"/><rect x="1705.4" y="569" width="18.6" height="18.6" fill="none" stroke="#ffffff" stroke-width="1.8"/><rect x="1703.6" y="526.1" width="18.6" height="18.6" fill="none" stroke="#ffffff" stroke-width="1.8"/><rect x="1700.2" y="485" width="18.6" height="18.6" fill="none" stroke="#ffffff" stroke-width="1.8"/><rect x="1698" y="442.2" width="18.6" height="18.6" fill="none" stroke="#ffffff" stroke-width="1.8"/><rect x="1694.1" y="395.5" width="18.6" height="18.6" fill="none" stroke="#ffffff" stroke-width="1.8"/><rect x="1731.7" y="584.1" width="18.6" height="18.6" fill="none" stroke="#ffffff" stroke-width="1.8"/><rect x="1754.1" y="554.2" width="18.6" height="18.6" fill="none" stroke="#ffffff" stroke-width="1.8"/><rect x="1776.7" y="527.8" width="18.6" height="18.6" fill="none" stroke="#ffffff" stroke-width="1.8"/><rect x="1797" y="501.9" width="18.6" height="18.6" fill="none" stroke="#ffffff" stroke-width="1.8"/><rect x="1820.9" y="471.7" width="18.6" height="18.6" fill="none" stroke="#ffffff" stroke-width="1.8"/><rect x="1776.6" y="612" width="18.6" height="18.6" fill="none" stroke="#ffffff" stroke-width="1.8"/><rect x="1847.6" y="612" width="18.6" height="18.6" fill="none" stroke="#ffffff" stroke-width="1.8"/><rect x="1911.1" y="612" width="18.6" height="18.6" fill="none" stroke="#ffffff" stroke-width="1.8"/><rect x="1978.1" y="612" width="18.6" height="18.6" fill="none" stroke="#ffffff" stroke-width="1.8"/><rect x="2055.2" y="612" width="18.6" height="18.6" fill="none" stroke="#ffffff" stroke-width="1.8"/><rect x="1689.4" y="614" width="18.6" height="18.6" fill="none" stroke="#ffffff" stroke-width="1.8"/><rect x="1671.7" y="614" width="18.6" height="18.6" fill="none" stroke="#ffffff" stroke-width="1.8"/><rect x="1652.7" y="614" width="18.6" height="18.6" fill="none" stroke="#ffffff" stroke-width="1.8"/><rect x="1634.3" y="614" width="18.6" height="18.6" fill="none" stroke="#ffffff" stroke-width="1.8"/><rect x="1615.1" y="614" width="18.6" height="18.6" fill="none" stroke="#ffffff" stroke-width="1.8"/><rect x="1711.1" y="642.1" width="18.6" height="18.6" fill="none" stroke="#ffffff" stroke-width="1.8"/><rect x="1713" y="671.9" width="18.6" height="18.6" fill="none" stroke="#ffffff" stroke-width="1.8"/><rect x="1713" y="696.6" width="18.6" height="18.6" fill="none" stroke="#ffffff" stroke-width="1.8"/><rect x="1714.7" y="724.2" width="18.6" height="18.6" fill="none" stroke="#ffffff" stroke-width="1.8"/><rect x="1716.5" y="754.1" width="18.6" height="18.6" fill="none" stroke="#ffffff" stroke-width="1.8"/><rect x="1673.8" y="657" width="18.6" height="18.6" fill="none" stroke="#ffffff" stroke-width="1.8"/><rect x="1640.1" y="700" width="18.6" height="18.6" fill="none" stroke="#ffffff" stroke-width="1.8"/><rect x="1606.5" y="740.7" width="18.6" height="18.6" fill="none" stroke="#ffffff" stroke-width="1.8"/><rect x="1572.7" y="782.1" width="18.6" height="18.6" fill="none" stroke="#ffffff" stroke-width="1.8"/><rect x="1535.5" y="828.8" width="18.6" height="18.6" fill="none" stroke="#ffffff" stroke-width="1.8"/><circle cx="1716.4" cy="578.3" r="5.9" fill="#a0b8a0" stroke="#000" stroke-width="1.7"/><circle cx="1714.6" cy="535.4" r="5.9" fill="#88b488" stroke="#000" stroke-width="1.7"/><circle cx="1712.7" cy="492.4" r="5.9" fill="#70b070" stroke="#000" stroke-width="1.7"/><circle cx="1711.4" cy="447.2" r="5.9" fill="#50b050" stroke="#000" stroke-width="1.7"/><circle cx="1709.5" cy="408.4" r="5.9" fill="#10b010" stroke="#000" stroke-width="1.7"/><circle cx="1741" cy="593.4" r="5.9" fill="#b8b8a0" stroke="#000" stroke-width="1.7"/><circle cx="1765.4" cy="563.2" r="5.9" fill="#b8b890" stroke="#000" stroke-width="1.7"/><circle cx="1787.2" cy="535.6" r="5.9" fill="#b8b878" stroke="#000" stroke-width="1.7"/><circle cx="1810.1" cy="507.4" r="5.9" fill="#b8b860" stroke="#000" stroke-width="1.7"/><circle cx="1830.2" cy="481" r="5.9" fill="#c0c010" stroke="#000" stroke-width="1.7"/><circle cx="1784.1" cy="621.3" r="5.9" fill="#c09090" stroke="#000" stroke-width="1.7"/><circle cx="1856.5" cy="621.3" r="5.9" fill="#c07070" stroke="#000" stroke-width="1.7"/><circle cx="1924.5" cy="619.1" r="5.9" fill="#c06060" stroke="#000" stroke-width="1.7"/><circle cx="1996.9" cy="619.5" r="5.9" fill="#c04848" stroke="#000" stroke-width="1.7"/><circle cx="2058.6" cy="617.7" r="5.9" fill="#cc0808" stroke="#000" stroke-width="1.7"/><circle cx="1698" cy="623.3" r="5.9" fill="#a0b8b8" stroke="#000" stroke-width="1.7"/><circle cx="1681.6" cy="625.2" r="5.9" fill="#88b0b0" stroke="#000" stroke-width="1.7"/><circle cx="1660.5" cy="625.2" r="5.9" fill="#70b0b0" stroke="#000" stroke-width="1.7"/><circle cx="1643.3" cy="625.2" r="5.9" fill="#50b0b0" stroke="#000" stroke-width="1.7"/><circle cx="1625.5" cy="625.2" r="5.9" fill="#10b0b0" stroke="#000" stroke-width="1.7"/><circle cx="1718.4" cy="651.4" r="5.9" fill="#b8a0b8" stroke="#000" stroke-width="1.7"/><circle cx="1718.4" cy="683.1" r="5.9" fill="#b888b8" stroke="#000" stroke-width="1.7"/><circle cx="1720.2" cy="709.3" r="5.9" fill="#b870b8" stroke="#000" stroke-width="1.7"/><circle cx="1720.2" cy="737.3" r="5.9" fill="#b850b8" stroke="#000" stroke-width="1.7"/><circle cx="1720.2" cy="765.3" r="5.9" fill="#b010b0" stroke="#000" stroke-width="1.7"/><circle cx="1684.4" cy="666.3" r="5.9" fill="#a0a0b8" stroke="#000" stroke-width="1.7"/><circle cx="1649.4" cy="709.3" r="5.9" fill="#8888b8" stroke="#000" stroke-width="1.7"/><circle cx="1615.3" cy="752.2" r="5.9" fill="#7070b8" stroke="#000" stroke-width="1.7"/><circle cx="1580.3" cy="797" r="5.9" fill="#5050c0" stroke="#000" stroke-width="1.7"/><circle cx="1546.1" cy="838.1" r="5.9" fill="#0000a0" stroke="#000" stroke-width="1.7"/><rect x="1709.1" y="614" width="18.6" height="18.6" fill="none" stroke="#000000" stroke-width="2.2"/><circle cx="1718.4" cy="621.5" r="5.9" fill="#ffffff" stroke="#000" stroke-width="1.7"/><rect x="1964" y="217.7" width="308.5" height="261.7" fill="#3a3a3a"/><defs><linearGradient id="gIT" x1="0" y1="0" x2="1" y2="0"><stop offset="0" stop-color="#4cff80"/><stop offset="0.5" stop-color="#8cff7c"/><stop offset="1" stop-color="#b8ff70"/></linearGradient><linearGradient id="gIB" x1="0" y1="0" x2="1" y2="0"><stop offset="0" stop-color="#64ffb8"/><stop offset="0.5" stop-color="#b4ffb8"/><stop offset="1" stop-color="#fff8a8"/></linearGradient><linearGradient id="gIM" x1="0" y1="0" x2="0" y2="1"><stop offset="0" stop-color="#fff" stop-opacity="0"/><stop offset="1" stop-color="#fff" stop-opacity="1"/></linearGradient><mask id="mIB"><rect x="1968" y="222.4" width="301" height="254" fill="url(#gIM)"/></mask></defs><rect x="1968" y="222.4" width="301" height="254" fill="#909090"/><rect x="1969.6" y="224" width="297.8" height="250.8" fill="url(#gIT)"/><rect x="1969.6" y="224" width="297.8" height="250.8" fill="url(#gIB)" mask="url(#mIB)"/><rect x="2106.5" y="337.5" width="20" height="20" fill="none" stroke="#fff" stroke-width="1.8"/><circle cx="2120" cy="351.4" r="6" fill="#a0b8a0" stroke="#111" stroke-width="1.6"/><rect x="2252.5" y="429.5" width="20" height="20" fill="none" stroke="#fff" stroke-width="1.8"/><circle cx="2261.3" cy="443" r="6" fill="#c0c4a0" stroke="#111" stroke-width="1.6"/><rect x="2267.4" y="222.4" width="9" height="254" fill="#222"/><rect x="2267.4" y="222.4" width="1.6" height="254" fill="#909090"/><rect x="2270" y="217.7" width="2.5" height="261.7" fill="#3a3a3a"/></svg></body></html>
